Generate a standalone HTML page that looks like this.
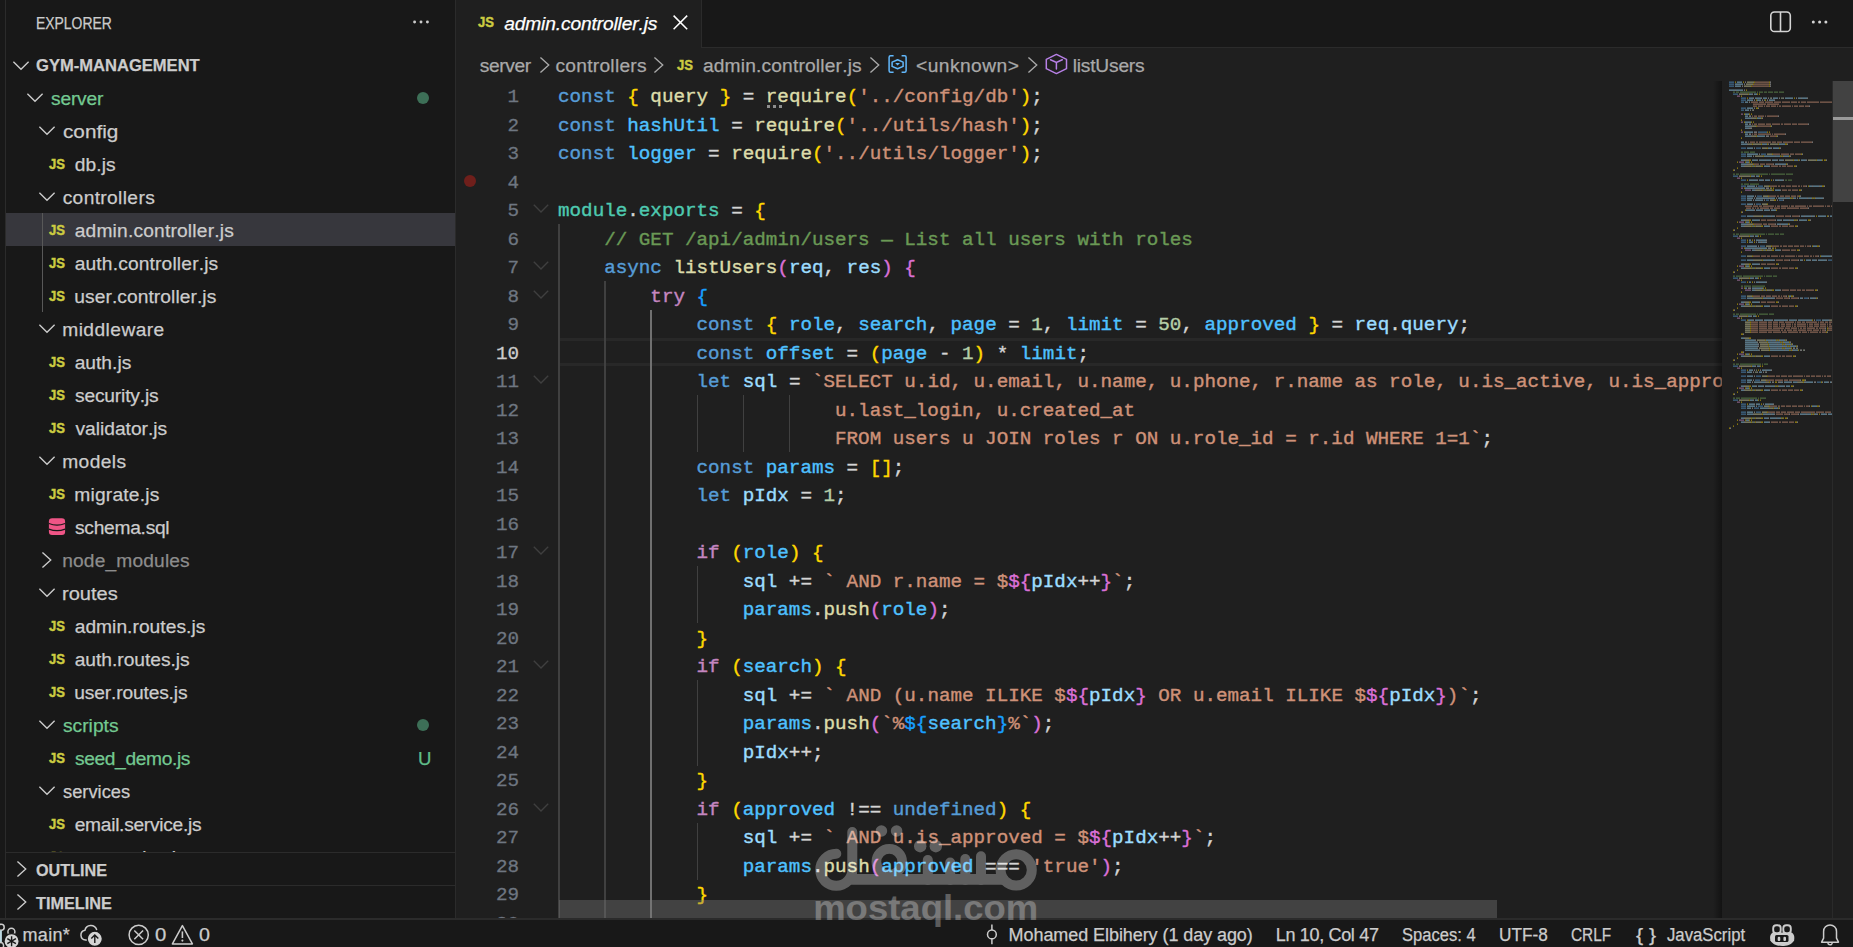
<!DOCTYPE html>
<html><head><meta charset="utf-8"><title>admin.controller.js - gym-management</title>
<style>
*{box-sizing:border-box;margin:0;padding:0}
html,body{width:1853px;height:947px;overflow:hidden;background:#1f1f1f}
body{position:relative;font-family:"Liberation Sans",sans-serif;color:#cccccc}
.a{position:absolute}
.t{position:absolute;white-space:pre;font-kerning:none;-webkit-text-stroke:0.25px}
#strip{position:absolute;left:0;top:0;width:6px;height:919px;background:#181818;border-right:1px solid #2b2b2b}
#sidebar{position:absolute;left:6px;top:0;width:450px;height:919px;background:#181818;border-right:1px solid #2b2b2b}
#tree{position:absolute;left:0;top:81px;width:455px;height:771px;overflow:hidden}
#treein{position:absolute;left:0;top:-81px;width:455px;height:947px}
#tabs{position:absolute;left:456px;top:0;width:1397px;height:48px;background:#181818;border-bottom:1px solid #2b2b2b}
#tab{position:absolute;left:456px;top:0;width:246px;height:48px;background:#1f1f1f;border-right:1px solid #2b2b2b}
#code{position:absolute;left:456px;top:81px;width:1266px;height:838px;overflow:hidden;font-family:"Liberation Mono",monospace;font-size:19.24px}
#codein{position:absolute;left:-456px;top:-81px;width:1853px;height:947px}
.ln{position:absolute;left:456px;width:63px;height:28.5px;line-height:28.5px;text-align:right;color:#6e7681;white-space:pre;-webkit-text-stroke:0.3px}
.ln.cur{color:#cccccc}
.cl{position:absolute;left:558px;height:28.5px;line-height:28.5px;white-space:pre;color:#d4d4d4;-webkit-text-stroke:0.4px}
#curline{position:absolute;left:559px;top:338px;width:1294px;height:28px;border-top:3px solid #282828;border-bottom:3px solid #282828}
#bp{position:absolute;left:464.2px;top:174.9px;width:12.2px;height:12.2px;border-radius:50%;background:#6f1f1b}
#hscroll{position:absolute;left:559px;top:900px;width:938px;height:18px;background:rgba(121,121,121,0.4)}
#mm{position:absolute;left:1722px;top:81px;width:111px;height:838px;background:#1f1f1f;overflow:hidden}
#mmshadow{position:absolute;left:1713px;top:81px;width:9px;height:838px;background:linear-gradient(to right,rgba(0,0,0,0) 0%,rgba(0,0,0,0.4) 100%)}
#vscroll{position:absolute;left:1833px;top:81px;width:20px;height:120.5px;background:rgba(121,121,121,0.4)}
#vmark{position:absolute;left:1833px;top:117px;width:20px;height:3px;background:#9a9a9a}
#vline{position:absolute;left:1832px;top:81px;width:1px;height:838px;background:#2a2a2a}
#status{position:absolute;left:0;top:918px;width:1853px;height:29px;background:#181818;border-top:2px solid #2b2b2b}
</style></head>
<body>
<div id="strip"></div>
<div id="sidebar"></div>
<div class="t" style="top:11px;font-size:17.4px;color:#cccccc;line-height:24px;height:24px;left:35.86px;transform:scaleX(0.8008);transform-origin:0 0;">EXPLORER</div>
<svg class="a" style="left:412px;top:19px" width="18" height="6" viewBox="0 0 18 6"><circle cx="2.6" cy="3" r="1.45" fill="#cccccc"/><circle cx="9" cy="3" r="1.45" fill="#cccccc"/><circle cx="15.4" cy="3" r="1.45" fill="#cccccc"/></svg>
<svg class="a" style="left:9.2px;top:54.0px" width="24" height="24" viewBox="0 0 24 24"><path d="M4.4 7.6499999999999995 L12 15.25 L19.6 7.6499999999999995" fill="none" stroke="#cccccc" stroke-width="1.35"/></svg>
<div class="t" style="top:53px;font-size:17.4px;color:#cccccc;line-height:24px;height:24px;font-weight:bold;left:35.87px;transform:scaleX(0.9521);transform-origin:0 0;">GYM-MANAGEMENT</div>
<div id="tree"><div id="treein">
<svg class="a" style="left:22.6px;top:86.3px" width="24" height="24" viewBox="0 0 24 24"><path d="M4.4 7.6499999999999995 L12 15.25 L19.6 7.6499999999999995" fill="none" stroke="#cccccc" stroke-width="1.35"/></svg>
<div class="t" style="top:87px;font-size:19.2px;color:#73c991;line-height:24px;height:24px;left:51.07px;letter-spacing:-0.218px;">server</div>
<div class="a" style="left:417px;top:91.6px;width:12px;height:12px;border-radius:50%;background:#3d6f57"></div>
<svg class="a" style="left:34.6px;top:119.30000000000001px" width="24" height="24" viewBox="0 0 24 24"><path d="M4.4 7.6499999999999995 L12 15.25 L19.6 7.6499999999999995" fill="none" stroke="#cccccc" stroke-width="1.35"/></svg>
<div class="t" style="top:120px;font-size:19.2px;color:#cccccc;line-height:24px;height:24px;left:62.62px;transform:scaleX(1.0797);transform-origin:0 0;">config</div>
<div class="t" style="top:152px;font-size:15.4px;color:#cbcb41;line-height:24px;height:24px;font-weight:bold;left:48.70px;transform:scaleX(0.8499);transform-origin:0 0;-webkit-text-stroke:0.45px #cbcb41;">JS</div>
<div class="t" style="top:153px;font-size:19.2px;color:#cccccc;line-height:24px;height:24px;left:74.69px;letter-spacing:0.111px;">db.js</div>
<svg class="a" style="left:34.6px;top:185.3px" width="24" height="24" viewBox="0 0 24 24"><path d="M4.4 7.6499999999999995 L12 15.25 L19.6 7.6499999999999995" fill="none" stroke="#cccccc" stroke-width="1.35"/></svg>
<div class="t" style="top:186px;font-size:19.2px;color:#cccccc;line-height:24px;height:24px;left:62.68px;letter-spacing:0.354px;">controllers</div>
<div class="a" style="left:6px;top:213px;width:449px;height:33px;background:#37373d"></div>
<div class="t" style="top:218px;font-size:15.4px;color:#cbcb41;line-height:24px;height:24px;font-weight:bold;left:48.70px;transform:scaleX(0.8499);transform-origin:0 0;-webkit-text-stroke:0.45px #cbcb41;">JS</div>
<div class="t" style="top:219px;font-size:19.2px;color:#cccccc;line-height:24px;height:24px;left:74.68px;letter-spacing:0.19px;">admin.controller.js</div>
<div class="t" style="top:251px;font-size:15.4px;color:#cbcb41;line-height:24px;height:24px;font-weight:bold;left:48.70px;transform:scaleX(0.8499);transform-origin:0 0;-webkit-text-stroke:0.45px #cbcb41;">JS</div>
<div class="t" style="top:252px;font-size:19.2px;color:#cccccc;line-height:24px;height:24px;left:74.68px;letter-spacing:0.161px;">auth.controller.js</div>
<div class="t" style="top:284px;font-size:15.4px;color:#cbcb41;line-height:24px;height:24px;font-weight:bold;left:48.70px;transform:scaleX(0.8499);transform-origin:0 0;-webkit-text-stroke:0.45px #cbcb41;">JS</div>
<div class="t" style="top:285px;font-size:19.2px;color:#cccccc;line-height:24px;height:24px;left:74.25px;letter-spacing:0.076px;">user.controller.js</div>
<svg class="a" style="left:34.6px;top:317.3px" width="24" height="24" viewBox="0 0 24 24"><path d="M4.4 7.6499999999999995 L12 15.25 L19.6 7.6499999999999995" fill="none" stroke="#cccccc" stroke-width="1.35"/></svg>
<div class="t" style="top:318px;font-size:19.2px;color:#cccccc;line-height:24px;height:24px;left:62.23px;letter-spacing:0.439px;">middleware</div>
<div class="t" style="top:350px;font-size:15.4px;color:#cbcb41;line-height:24px;height:24px;font-weight:bold;left:48.70px;transform:scaleX(0.8499);transform-origin:0 0;-webkit-text-stroke:0.45px #cbcb41;">JS</div>
<div class="t" style="top:351px;font-size:19.2px;color:#cccccc;line-height:24px;height:24px;left:74.68px;letter-spacing:0.007px;">auth.js</div>
<div class="t" style="top:383px;font-size:15.4px;color:#cbcb41;line-height:24px;height:24px;font-weight:bold;left:48.70px;transform:scaleX(0.8499);transform-origin:0 0;-webkit-text-stroke:0.45px #cbcb41;">JS</div>
<div class="t" style="top:384px;font-size:19.2px;color:#cccccc;line-height:24px;height:24px;left:74.97px;letter-spacing:-0.162px;">security.js</div>
<div class="t" style="top:416px;font-size:15.4px;color:#cbcb41;line-height:24px;height:24px;font-weight:bold;left:48.70px;transform:scaleX(0.8499);transform-origin:0 0;-webkit-text-stroke:0.45px #cbcb41;">JS</div>
<div class="t" style="top:417px;font-size:19.2px;color:#cccccc;line-height:24px;height:24px;left:75.43px;letter-spacing:-0.001px;">validator.js</div>
<svg class="a" style="left:34.6px;top:449.3px" width="24" height="24" viewBox="0 0 24 24"><path d="M4.4 7.6499999999999995 L12 15.25 L19.6 7.6499999999999995" fill="none" stroke="#cccccc" stroke-width="1.35"/></svg>
<div class="t" style="top:450px;font-size:19.2px;color:#cccccc;line-height:24px;height:24px;left:62.23px;letter-spacing:0.395px;">models</div>
<div class="t" style="top:482px;font-size:15.4px;color:#cbcb41;line-height:24px;height:24px;font-weight:bold;left:48.70px;transform:scaleX(0.8499);transform-origin:0 0;-webkit-text-stroke:0.45px #cbcb41;">JS</div>
<div class="t" style="top:483px;font-size:19.2px;color:#cccccc;line-height:24px;height:24px;left:74.22px;letter-spacing:0.216px;">migrate.js</div>
<svg class="a" style="left:48.0px;top:517.4px" width="18" height="19" viewBox="0 0 18 19"><rect x="0.9" y="1.3" width="16.2" height="16.6" rx="3.2" fill="#ef5586"/><path d="M0.9 6.5 Q9 9.7 17.1 6.5 M0.9 12.1 Q9 15.3 17.1 12.1" fill="none" stroke="#181818" stroke-width="1.15"/></svg>
<div class="t" style="top:516px;font-size:19.2px;color:#cccccc;line-height:24px;height:24px;left:74.97px;letter-spacing:-0.265px;">schema.sql</div>
<svg class="a" style="left:35.3px;top:548.3px" width="24" height="24" viewBox="0 0 24 24"><path d="M7.449999999999999 4.4 L15.749999999999998 12 L7.449999999999999 19.6" fill="none" stroke="#cccccc" stroke-width="1.35"/></svg>
<div class="t" style="top:549px;font-size:19.2px;color:#8c8c8c;line-height:24px;height:24px;left:62.23px;letter-spacing:0.146px;">node_modules</div>
<svg class="a" style="left:34.6px;top:581.3px" width="24" height="24" viewBox="0 0 24 24"><path d="M4.4 7.6499999999999995 L12 15.25 L19.6 7.6499999999999995" fill="none" stroke="#cccccc" stroke-width="1.35"/></svg>
<div class="t" style="top:582px;font-size:19.2px;color:#cccccc;line-height:24px;height:24px;left:62.17px;transform:scaleX(1.0449);transform-origin:0 0;">routes</div>
<div class="t" style="top:614px;font-size:15.4px;color:#cbcb41;line-height:24px;height:24px;font-weight:bold;left:48.70px;transform:scaleX(0.8499);transform-origin:0 0;-webkit-text-stroke:0.45px #cbcb41;">JS</div>
<div class="t" style="top:615px;font-size:19.2px;color:#cccccc;line-height:24px;height:24px;left:74.68px;letter-spacing:0.037px;">admin.routes.js</div>
<div class="t" style="top:647px;font-size:15.4px;color:#cbcb41;line-height:24px;height:24px;font-weight:bold;left:48.70px;transform:scaleX(0.8499);transform-origin:0 0;-webkit-text-stroke:0.45px #cbcb41;">JS</div>
<div class="t" style="top:648px;font-size:19.2px;color:#cccccc;line-height:24px;height:24px;left:74.68px;letter-spacing:-0.012px;">auth.routes.js</div>
<div class="t" style="top:680px;font-size:15.4px;color:#cbcb41;line-height:24px;height:24px;font-weight:bold;left:48.70px;transform:scaleX(0.8499);transform-origin:0 0;-webkit-text-stroke:0.45px #cbcb41;">JS</div>
<div class="t" style="top:681px;font-size:19.2px;color:#cccccc;line-height:24px;height:24px;left:74.25px;letter-spacing:-0.147px;">user.routes.js</div>
<svg class="a" style="left:34.6px;top:713.3px" width="24" height="24" viewBox="0 0 24 24"><path d="M4.4 7.6499999999999995 L12 15.25 L19.6 7.6499999999999995" fill="none" stroke="#cccccc" stroke-width="1.35"/></svg>
<div class="t" style="top:714px;font-size:19.2px;color:#73c991;line-height:24px;height:24px;left:62.97px;letter-spacing:0.026px;">scripts</div>
<div class="a" style="left:417px;top:718.6px;width:12px;height:12px;border-radius:50%;background:#3d6f57"></div>
<div class="t" style="top:746px;font-size:15.4px;color:#cbcb41;line-height:24px;height:24px;font-weight:bold;left:48.70px;transform:scaleX(0.8499);transform-origin:0 0;-webkit-text-stroke:0.45px #cbcb41;">JS</div>
<div class="t" style="top:747px;font-size:19.2px;color:#73c991;line-height:24px;height:24px;left:74.97px;letter-spacing:-0.365px;">seed_demo.js</div>
<div class="t" style="top:747px;font-size:18.6px;color:#5fbd8a;line-height:24px;height:24px;left:417.97px;letter-spacing:0.338px;">U</div>
<svg class="a" style="left:34.6px;top:779.3px" width="24" height="24" viewBox="0 0 24 24"><path d="M4.4 7.6499999999999995 L12 15.25 L19.6 7.6499999999999995" fill="none" stroke="#cccccc" stroke-width="1.35"/></svg>
<div class="t" style="top:780px;font-size:19.2px;color:#cccccc;line-height:24px;height:24px;left:62.99px;transform:scaleX(0.9539);transform-origin:0 0;">services</div>
<div class="t" style="top:812px;font-size:15.4px;color:#cbcb41;line-height:24px;height:24px;font-weight:bold;left:48.70px;transform:scaleX(0.8499);transform-origin:0 0;-webkit-text-stroke:0.45px #cbcb41;">JS</div>
<div class="t" style="top:813px;font-size:19.2px;color:#cccccc;line-height:24px;height:24px;left:74.68px;letter-spacing:-0.281px;">email.service.js</div>
<div class="t" style="top:845px;font-size:15.4px;color:#cbcb41;line-height:24px;height:24px;font-weight:bold;left:48.70px;transform:scaleX(0.8499);transform-origin:0 0;-webkit-text-stroke:0.45px #cbcb41;">JS</div>
<div class="t" style="top:846px;font-size:19.2px;color:#cccccc;line-height:24px;height:24px;left:74.69px;letter-spacing:-0.08px;">otp.service.js</div>
<div class="a" style="left:42px;top:213px;height:99px;width:1px;background:#585858"></div>
</div></div>
<div class="a" style="left:6px;top:852px;width:449px;height:34px;background:#181818;border-top:1px solid #2b2b2b"></div>
<svg class="a" style="left:9.8px;top:857.1px" width="24" height="24" viewBox="0 0 24 24"><path d="M7.449999999999999 4.4 L15.749999999999998 12 L7.449999999999999 19.6" fill="none" stroke="#cccccc" stroke-width="1.35"/></svg>
<div class="t" style="top:858px;font-size:17.4px;color:#cccccc;line-height:24px;height:24px;font-weight:bold;left:35.54px;transform:scaleX(0.9310);transform-origin:0 0;">OUTLINE</div>
<div class="a" style="left:6px;top:885px;width:449px;height:34px;background:#181818;border-top:1px solid #2b2b2b"></div>
<svg class="a" style="left:9.8px;top:890.1px" width="24" height="24" viewBox="0 0 24 24"><path d="M7.449999999999999 4.4 L15.749999999999998 12 L7.449999999999999 19.6" fill="none" stroke="#cccccc" stroke-width="1.35"/></svg>
<div class="t" style="top:891px;font-size:17.4px;color:#cccccc;line-height:24px;height:24px;font-weight:bold;left:36.22px;transform:scaleX(0.9337);transform-origin:0 0;">TIMELINE</div>

<div id="code"><div id="codein">
<div id="curline"></div>
<div class="a" style="left:558.00px;top:224.00px;height:741.00px;width:1.5px;background:#404040"></div>
<div class="a" style="left:604.18px;top:281.00px;height:684.00px;width:1.5px;background:#404040"></div>
<div class="a" style="left:650.37px;top:309.50px;height:655.50px;width:1.5px;background:#707070"></div>
<div class="a" style="left:696.55px;top:395.00px;height:57.00px;width:1.5px;background:#404040"></div>
<div class="a" style="left:742.74px;top:395.00px;height:57.00px;width:1.5px;background:#404040"></div>
<div class="a" style="left:788.92px;top:395.00px;height:57.00px;width:1.5px;background:#404040"></div>
<div class="a" style="left:696.55px;top:566.00px;height:57.00px;width:1.5px;background:#404040"></div>
<div class="a" style="left:696.55px;top:680.00px;height:85.50px;width:1.5px;background:#404040"></div>
<div class="a" style="left:696.55px;top:822.50px;height:57.00px;width:1.5px;background:#404040"></div>
<div class="ln" style="top:83.0px">1</div>
<div class="cl" style="top:83.0px"><span style="color:#569cd6">const</span> <span style="color:#ffd700">{</span> <span style="color:#dcdcaa">query</span> <span style="color:#ffd700">}</span> = <span style="color:#dcdcaa">require</span><span style="color:#ffd700">(</span><span style="color:#ce9178">&#x27;../config/db&#x27;</span><span style="color:#ffd700">)</span>;</div>
<div class="ln" style="top:111.5px">2</div>
<div class="cl" style="top:111.5px"><span style="color:#569cd6">const</span> <span style="color:#4fc1ff">hashUtil</span> = <span style="color:#dcdcaa">require</span><span style="color:#ffd700">(</span><span style="color:#ce9178">&#x27;../utils/hash&#x27;</span><span style="color:#ffd700">)</span>;</div>
<div class="ln" style="top:140.0px">3</div>
<div class="cl" style="top:140.0px"><span style="color:#569cd6">const</span> <span style="color:#4fc1ff">logger</span> = <span style="color:#dcdcaa">require</span><span style="color:#ffd700">(</span><span style="color:#ce9178">&#x27;../utils/logger&#x27;</span><span style="color:#ffd700">)</span>;</div>
<div class="ln" style="top:168.5px">4</div>
<div class="ln" style="top:197.0px">5</div>
<svg class="a" style="left:529.3px;top:197.4px" width="24" height="24" viewBox="0 0 24 24"><path d="M4.8 7.8500000000000005 L12 15.049999999999999 L19.2 7.8500000000000005" fill="none" stroke="#3f3f3f" stroke-width="1.4"/></svg>
<div class="cl" style="top:197.0px"><span style="color:#4ec9b0">module</span>.<span style="color:#4ec9b0">exports</span> = <span style="color:#ffd700">{</span></div>
<div class="ln" style="top:225.5px">6</div>
<div class="cl" style="top:225.5px">    <span style="color:#6a9955">// GET /api/admin/users — List all users with roles</span></div>
<div class="ln" style="top:254.0px">7</div>
<svg class="a" style="left:529.3px;top:254.39999999999998px" width="24" height="24" viewBox="0 0 24 24"><path d="M4.8 7.8500000000000005 L12 15.049999999999999 L19.2 7.8500000000000005" fill="none" stroke="#3f3f3f" stroke-width="1.4"/></svg>
<div class="cl" style="top:254.0px">    <span style="color:#569cd6">async</span> <span style="color:#dcdcaa">listUsers</span><span style="color:#da70d6">(</span><span style="color:#9cdcfe">req</span>, <span style="color:#9cdcfe">res</span><span style="color:#da70d6">)</span> <span style="color:#da70d6">{</span></div>
<div class="ln" style="top:282.5px">8</div>
<svg class="a" style="left:529.3px;top:282.9px" width="24" height="24" viewBox="0 0 24 24"><path d="M4.8 7.8500000000000005 L12 15.049999999999999 L19.2 7.8500000000000005" fill="none" stroke="#3f3f3f" stroke-width="1.4"/></svg>
<div class="cl" style="top:282.5px">        <span style="color:#c586c0">try</span> <span style="color:#179fff">{</span></div>
<div class="ln" style="top:311.0px">9</div>
<div class="cl" style="top:311.0px">            <span style="color:#569cd6">const</span> <span style="color:#ffd700">{</span> <span style="color:#4fc1ff">role</span>, <span style="color:#4fc1ff">search</span>, <span style="color:#4fc1ff">page</span> = <span style="color:#b5cea8">1</span>, <span style="color:#4fc1ff">limit</span> = <span style="color:#b5cea8">50</span>, <span style="color:#4fc1ff">approved</span> <span style="color:#ffd700">}</span> = <span style="color:#9cdcfe">req</span>.<span style="color:#9cdcfe">query</span>;</div>
<div class="ln cur" style="top:339.5px">10</div>
<div class="cl" style="top:339.5px">            <span style="color:#569cd6">const</span> <span style="color:#4fc1ff">offset</span> = <span style="color:#ffd700">(</span><span style="color:#4fc1ff">page</span> - <span style="color:#b5cea8">1</span><span style="color:#ffd700">)</span> * <span style="color:#4fc1ff">limit</span>;</div>
<div class="ln" style="top:368.0px">11</div>
<svg class="a" style="left:529.3px;top:368.4px" width="24" height="24" viewBox="0 0 24 24"><path d="M4.8 7.8500000000000005 L12 15.049999999999999 L19.2 7.8500000000000005" fill="none" stroke="#3f3f3f" stroke-width="1.4"/></svg>
<div class="cl" style="top:368.0px">            <span style="color:#569cd6">let</span> <span style="color:#9cdcfe">sql</span> = <span style="color:#ce9178">`SELECT u.id, u.email, u.name, u.phone, r.name as role, u.is_active, u.is_approved, u.email_verified,</span></div>
<div class="ln" style="top:396.5px">12</div>
<div class="cl" style="top:396.5px">                        <span style="color:#ce9178">u.last_login, u.created_at</span></div>
<div class="ln" style="top:425.0px">13</div>
<div class="cl" style="top:425.0px">                        <span style="color:#ce9178">FROM users u JOIN roles r ON u.role_id = r.id WHERE 1=1`</span>;</div>
<div class="ln" style="top:453.5px">14</div>
<div class="cl" style="top:453.5px">            <span style="color:#569cd6">const</span> <span style="color:#4fc1ff">params</span> = <span style="color:#ffd700">[]</span>;</div>
<div class="ln" style="top:482.0px">15</div>
<div class="cl" style="top:482.0px">            <span style="color:#569cd6">let</span> <span style="color:#9cdcfe">pIdx</span> = <span style="color:#b5cea8">1</span>;</div>
<div class="ln" style="top:510.5px">16</div>
<div class="ln" style="top:539.0px">17</div>
<svg class="a" style="left:529.3px;top:539.4px" width="24" height="24" viewBox="0 0 24 24"><path d="M4.8 7.8500000000000005 L12 15.049999999999999 L19.2 7.8500000000000005" fill="none" stroke="#3f3f3f" stroke-width="1.4"/></svg>
<div class="cl" style="top:539.0px">            <span style="color:#c586c0">if</span> <span style="color:#ffd700">(</span><span style="color:#4fc1ff">role</span><span style="color:#ffd700">)</span> <span style="color:#ffd700">{</span></div>
<div class="ln" style="top:567.5px">18</div>
<div class="cl" style="top:567.5px">                <span style="color:#9cdcfe">sql</span> += <span style="color:#ce9178">` AND r.name = $</span><span style="color:#da70d6">${</span><span style="color:#9cdcfe">pIdx</span>++<span style="color:#da70d6">}</span><span style="color:#ce9178">`</span>;</div>
<div class="ln" style="top:596.0px">19</div>
<div class="cl" style="top:596.0px">                <span style="color:#4fc1ff">params</span>.<span style="color:#dcdcaa">push</span><span style="color:#da70d6">(</span><span style="color:#4fc1ff">role</span><span style="color:#da70d6">)</span>;</div>
<div class="ln" style="top:624.5px">20</div>
<div class="cl" style="top:624.5px">            <span style="color:#ffd700">}</span></div>
<div class="ln" style="top:653.0px">21</div>
<svg class="a" style="left:529.3px;top:653.4px" width="24" height="24" viewBox="0 0 24 24"><path d="M4.8 7.8500000000000005 L12 15.049999999999999 L19.2 7.8500000000000005" fill="none" stroke="#3f3f3f" stroke-width="1.4"/></svg>
<div class="cl" style="top:653.0px">            <span style="color:#c586c0">if</span> <span style="color:#ffd700">(</span><span style="color:#4fc1ff">search</span><span style="color:#ffd700">)</span> <span style="color:#ffd700">{</span></div>
<div class="ln" style="top:681.5px">22</div>
<div class="cl" style="top:681.5px">                <span style="color:#9cdcfe">sql</span> += <span style="color:#ce9178">` AND (u.name ILIKE $</span><span style="color:#da70d6">${</span><span style="color:#9cdcfe">pIdx</span><span style="color:#da70d6">}</span><span style="color:#ce9178"> OR u.email ILIKE $</span><span style="color:#da70d6">${</span><span style="color:#9cdcfe">pIdx</span><span style="color:#da70d6">}</span><span style="color:#ce9178">)`</span>;</div>
<div class="ln" style="top:710.0px">23</div>
<div class="cl" style="top:710.0px">                <span style="color:#4fc1ff">params</span>.<span style="color:#dcdcaa">push</span><span style="color:#da70d6">(</span><span style="color:#ce9178">`%</span><span style="color:#179fff">${</span><span style="color:#4fc1ff">search</span><span style="color:#179fff">}</span><span style="color:#ce9178">%`</span><span style="color:#da70d6">)</span>;</div>
<div class="ln" style="top:738.5px">24</div>
<div class="cl" style="top:738.5px">                <span style="color:#9cdcfe">pIdx</span>++;</div>
<div class="ln" style="top:767.0px">25</div>
<div class="cl" style="top:767.0px">            <span style="color:#ffd700">}</span></div>
<div class="ln" style="top:795.5px">26</div>
<svg class="a" style="left:529.3px;top:795.9px" width="24" height="24" viewBox="0 0 24 24"><path d="M4.8 7.8500000000000005 L12 15.049999999999999 L19.2 7.8500000000000005" fill="none" stroke="#3f3f3f" stroke-width="1.4"/></svg>
<div class="cl" style="top:795.5px">            <span style="color:#c586c0">if</span> <span style="color:#ffd700">(</span><span style="color:#4fc1ff">approved</span> !== <span style="color:#569cd6">undefined</span><span style="color:#ffd700">)</span> <span style="color:#ffd700">{</span></div>
<div class="ln" style="top:824.0px">27</div>
<div class="cl" style="top:824.0px">                <span style="color:#9cdcfe">sql</span> += <span style="color:#ce9178">` AND u.is_approved = $</span><span style="color:#da70d6">${</span><span style="color:#9cdcfe">pIdx</span>++<span style="color:#da70d6">}</span><span style="color:#ce9178">`</span>;</div>
<div class="ln" style="top:852.5px">28</div>
<div class="cl" style="top:852.5px">                <span style="color:#4fc1ff">params</span>.<span style="color:#dcdcaa">push</span><span style="color:#da70d6">(</span><span style="color:#4fc1ff">approved</span> === <span style="color:#ce9178">&#x27;true&#x27;</span><span style="color:#da70d6">)</span>;</div>
<div class="ln" style="top:881.0px">29</div>
<div class="cl" style="top:881.0px">            <span style="color:#ffd700">}</span></div>
<div class="ln" style="top:909.5px">30</div>
<div id="bp"></div>
<div class="a" style="left:767px;top:105px;width:3px;height:3.2px;background:#8e8e8e"></div><div class="a" style="left:773px;top:105px;width:3px;height:3.2px;background:#8e8e8e"></div><div class="a" style="left:779px;top:105px;width:3px;height:3.2px;background:#8e8e8e"></div>
</div></div>
<div id="hscroll"></div>
<div id="mm"><svg class="a" style="left:0;top:0" width="111" height="350" viewBox="0 0 111 350"><g opacity="0.56"><rect x="7" y="0.5" width="5" height="1.3" fill="#569cd6"/><rect x="13" y="0.5" width="1" height="1.3" fill="#ffd700"/><rect x="15" y="0.5" width="5" height="1.3" fill="#9cdcfe"/><rect x="21" y="0.5" width="1" height="1.3" fill="#ffd700"/><rect x="23" y="0.5" width="1" height="1.3" fill="#d4d4d4"/><rect x="25" y="0.5" width="7" height="1.3" fill="#dcdcaa"/><rect x="32" y="0.5" width="1" height="1.3" fill="#ffd700"/><rect x="33" y="0.5" width="14" height="1.3" fill="#ce9178"/><rect x="47" y="0.5" width="1" height="1.3" fill="#ffd700"/><rect x="48" y="0.5" width="1" height="1.3" fill="#d4d4d4"/><rect x="7" y="2.5" width="5" height="1.3" fill="#569cd6"/><rect x="13" y="2.5" width="8" height="1.3" fill="#9cdcfe"/><rect x="22" y="2.5" width="1" height="1.3" fill="#d4d4d4"/><rect x="24" y="2.5" width="7" height="1.3" fill="#dcdcaa"/><rect x="31" y="2.5" width="1" height="1.3" fill="#ffd700"/><rect x="32" y="2.5" width="15" height="1.3" fill="#ce9178"/><rect x="47" y="2.5" width="1" height="1.3" fill="#ffd700"/><rect x="48" y="2.5" width="1" height="1.3" fill="#d4d4d4"/><rect x="7" y="4.5" width="5" height="1.3" fill="#569cd6"/><rect x="13" y="4.5" width="6" height="1.3" fill="#9cdcfe"/><rect x="20" y="4.5" width="1" height="1.3" fill="#d4d4d4"/><rect x="22" y="4.5" width="7" height="1.3" fill="#dcdcaa"/><rect x="29" y="4.5" width="1" height="1.3" fill="#ffd700"/><rect x="30" y="4.5" width="17" height="1.3" fill="#ce9178"/><rect x="47" y="4.5" width="1" height="1.3" fill="#ffd700"/><rect x="48" y="4.5" width="1" height="1.3" fill="#d4d4d4"/><rect x="7" y="8.5" width="6" height="1.3" fill="#9cdcfe"/><rect x="13" y="8.5" width="1" height="1.3" fill="#d4d4d4"/><rect x="14" y="8.5" width="7" height="1.3" fill="#9cdcfe"/><rect x="22" y="8.5" width="1" height="1.3" fill="#d4d4d4"/><rect x="24" y="8.5" width="1" height="1.3" fill="#ffd700"/><rect x="11" y="10.5" width="2" height="1.3" fill="#6a9955"/><rect x="14" y="10.5" width="3" height="1.3" fill="#6a9955"/><rect x="18" y="10.5" width="16" height="1.3" fill="#6a9955"/><rect x="35" y="10.5" width="1" height="1.3" fill="#6a9955"/><rect x="37" y="10.5" width="4" height="1.3" fill="#6a9955"/><rect x="42" y="10.5" width="3" height="1.3" fill="#6a9955"/><rect x="46" y="10.5" width="5" height="1.3" fill="#6a9955"/><rect x="52" y="10.5" width="4" height="1.3" fill="#6a9955"/><rect x="57" y="10.5" width="5" height="1.3" fill="#6a9955"/><rect x="11" y="12.5" width="5" height="1.3" fill="#569cd6"/><rect x="17" y="12.5" width="9" height="1.3" fill="#dcdcaa"/><rect x="26" y="12.5" width="1" height="1.3" fill="#ffd700"/><rect x="27" y="12.5" width="3" height="1.3" fill="#9cdcfe"/><rect x="30" y="12.5" width="1" height="1.3" fill="#d4d4d4"/><rect x="32" y="12.5" width="3" height="1.3" fill="#9cdcfe"/><rect x="35" y="12.5" width="1" height="1.3" fill="#ffd700"/><rect x="37" y="12.5" width="1" height="1.3" fill="#ffd700"/><rect x="15" y="14.5" width="3" height="1.3" fill="#c586c0"/><rect x="19" y="14.5" width="1" height="1.3" fill="#ffd700"/><rect x="19" y="16.5" width="5" height="1.3" fill="#569cd6"/><rect x="25" y="16.5" width="1" height="1.3" fill="#ffd700"/><rect x="27" y="16.5" width="4" height="1.3" fill="#9cdcfe"/><rect x="31" y="16.5" width="1" height="1.3" fill="#d4d4d4"/><rect x="33" y="16.5" width="6" height="1.3" fill="#9cdcfe"/><rect x="39" y="16.5" width="1" height="1.3" fill="#d4d4d4"/><rect x="41" y="16.5" width="4" height="1.3" fill="#9cdcfe"/><rect x="46" y="16.5" width="1" height="1.3" fill="#d4d4d4"/><rect x="48" y="16.5" width="1" height="1.3" fill="#b5cea8"/><rect x="49" y="16.5" width="1" height="1.3" fill="#d4d4d4"/><rect x="51" y="16.5" width="5" height="1.3" fill="#9cdcfe"/><rect x="57" y="16.5" width="1" height="1.3" fill="#d4d4d4"/><rect x="59" y="16.5" width="2" height="1.3" fill="#b5cea8"/><rect x="61" y="16.5" width="1" height="1.3" fill="#d4d4d4"/><rect x="63" y="16.5" width="8" height="1.3" fill="#9cdcfe"/><rect x="72" y="16.5" width="1" height="1.3" fill="#ffd700"/><rect x="74" y="16.5" width="1" height="1.3" fill="#d4d4d4"/><rect x="76" y="16.5" width="3" height="1.3" fill="#9cdcfe"/><rect x="79" y="16.5" width="1" height="1.3" fill="#d4d4d4"/><rect x="80" y="16.5" width="5" height="1.3" fill="#9cdcfe"/><rect x="85" y="16.5" width="1" height="1.3" fill="#d4d4d4"/><rect x="19" y="18.5" width="5" height="1.3" fill="#569cd6"/><rect x="25" y="18.5" width="6" height="1.3" fill="#9cdcfe"/><rect x="32" y="18.5" width="1" height="1.3" fill="#d4d4d4"/><rect x="34" y="18.5" width="1" height="1.3" fill="#ffd700"/><rect x="35" y="18.5" width="4" height="1.3" fill="#9cdcfe"/><rect x="40" y="18.5" width="1" height="1.3" fill="#d4d4d4"/><rect x="42" y="18.5" width="1" height="1.3" fill="#b5cea8"/><rect x="43" y="18.5" width="1" height="1.3" fill="#ffd700"/><rect x="45" y="18.5" width="1" height="1.3" fill="#d4d4d4"/><rect x="47" y="18.5" width="5" height="1.3" fill="#9cdcfe"/><rect x="52" y="18.5" width="1" height="1.3" fill="#d4d4d4"/><rect x="19" y="20.5" width="3" height="1.3" fill="#569cd6"/><rect x="23" y="20.5" width="3" height="1.3" fill="#9cdcfe"/><rect x="27" y="20.5" width="1" height="1.3" fill="#d4d4d4"/><rect x="29" y="20.5" width="7" height="1.3" fill="#ce9178"/><rect x="37" y="20.5" width="5" height="1.3" fill="#ce9178"/><rect x="43" y="20.5" width="8" height="1.3" fill="#ce9178"/><rect x="52" y="20.5" width="7" height="1.3" fill="#ce9178"/><rect x="60" y="20.5" width="8" height="1.3" fill="#ce9178"/><rect x="69" y="20.5" width="6" height="1.3" fill="#ce9178"/><rect x="76" y="20.5" width="2" height="1.3" fill="#ce9178"/><rect x="79" y="20.5" width="5" height="1.3" fill="#ce9178"/><rect x="85" y="20.5" width="12" height="1.3" fill="#ce9178"/><rect x="98" y="20.5" width="13" height="1.3" fill="#ce9178"/><rect x="31" y="22.5" width="13" height="1.3" fill="#ce9178"/><rect x="45" y="22.5" width="12" height="1.3" fill="#ce9178"/><rect x="31" y="24.5" width="4" height="1.3" fill="#ce9178"/><rect x="36" y="24.5" width="5" height="1.3" fill="#ce9178"/><rect x="42" y="24.5" width="1" height="1.3" fill="#ce9178"/><rect x="44" y="24.5" width="4" height="1.3" fill="#ce9178"/><rect x="49" y="24.5" width="5" height="1.3" fill="#ce9178"/><rect x="55" y="24.5" width="1" height="1.3" fill="#ce9178"/><rect x="57" y="24.5" width="2" height="1.3" fill="#ce9178"/><rect x="60" y="24.5" width="9" height="1.3" fill="#ce9178"/><rect x="70" y="24.5" width="1" height="1.3" fill="#ce9178"/><rect x="72" y="24.5" width="4" height="1.3" fill="#ce9178"/><rect x="77" y="24.5" width="5" height="1.3" fill="#ce9178"/><rect x="83" y="24.5" width="4" height="1.3" fill="#ce9178"/><rect x="87" y="24.5" width="1" height="1.3" fill="#d4d4d4"/><rect x="19" y="26.5" width="5" height="1.3" fill="#569cd6"/><rect x="25" y="26.5" width="6" height="1.3" fill="#9cdcfe"/><rect x="32" y="26.5" width="1" height="1.3" fill="#d4d4d4"/><rect x="34" y="26.5" width="1" height="1.3" fill="#ffd700"/><rect x="35" y="26.5" width="1" height="1.3" fill="#ffd700"/><rect x="36" y="26.5" width="1" height="1.3" fill="#d4d4d4"/><rect x="19" y="28.5" width="3" height="1.3" fill="#569cd6"/><rect x="23" y="28.5" width="4" height="1.3" fill="#9cdcfe"/><rect x="28" y="28.5" width="1" height="1.3" fill="#d4d4d4"/><rect x="30" y="28.5" width="1" height="1.3" fill="#b5cea8"/><rect x="31" y="28.5" width="1" height="1.3" fill="#d4d4d4"/><rect x="19" y="32.5" width="2" height="1.3" fill="#c586c0"/><rect x="22" y="32.5" width="1" height="1.3" fill="#ffd700"/><rect x="23" y="32.5" width="4" height="1.3" fill="#9cdcfe"/><rect x="27" y="32.5" width="1" height="1.3" fill="#ffd700"/><rect x="29" y="32.5" width="1" height="1.3" fill="#ffd700"/><rect x="23" y="34.5" width="3" height="1.3" fill="#9cdcfe"/><rect x="27" y="34.5" width="1" height="1.3" fill="#d4d4d4"/><rect x="28" y="34.5" width="1" height="1.3" fill="#d4d4d4"/><rect x="30" y="34.5" width="1" height="1.3" fill="#ce9178"/><rect x="32" y="34.5" width="3" height="1.3" fill="#ce9178"/><rect x="36" y="34.5" width="6" height="1.3" fill="#ce9178"/><rect x="43" y="34.5" width="1" height="1.3" fill="#ce9178"/><rect x="45" y="34.5" width="11" height="1.3" fill="#ce9178"/><rect x="56" y="34.5" width="1" height="1.3" fill="#d4d4d4"/><rect x="23" y="36.5" width="6" height="1.3" fill="#9cdcfe"/><rect x="29" y="36.5" width="1" height="1.3" fill="#d4d4d4"/><rect x="30" y="36.5" width="4" height="1.3" fill="#dcdcaa"/><rect x="34" y="36.5" width="1" height="1.3" fill="#ffd700"/><rect x="35" y="36.5" width="4" height="1.3" fill="#9cdcfe"/><rect x="39" y="36.5" width="1" height="1.3" fill="#ffd700"/><rect x="40" y="36.5" width="1" height="1.3" fill="#d4d4d4"/><rect x="19" y="38.5" width="1" height="1.3" fill="#ffd700"/><rect x="19" y="40.5" width="2" height="1.3" fill="#c586c0"/><rect x="22" y="40.5" width="1" height="1.3" fill="#ffd700"/><rect x="23" y="40.5" width="6" height="1.3" fill="#9cdcfe"/><rect x="29" y="40.5" width="1" height="1.3" fill="#ffd700"/><rect x="31" y="40.5" width="1" height="1.3" fill="#ffd700"/><rect x="23" y="42.5" width="3" height="1.3" fill="#9cdcfe"/><rect x="27" y="42.5" width="1" height="1.3" fill="#d4d4d4"/><rect x="28" y="42.5" width="1" height="1.3" fill="#d4d4d4"/><rect x="30" y="42.5" width="1" height="1.3" fill="#ce9178"/><rect x="32" y="42.5" width="3" height="1.3" fill="#ce9178"/><rect x="36" y="42.5" width="7" height="1.3" fill="#ce9178"/><rect x="44" y="42.5" width="5" height="1.3" fill="#ce9178"/><rect x="50" y="42.5" width="8" height="1.3" fill="#ce9178"/><rect x="59" y="42.5" width="2" height="1.3" fill="#ce9178"/><rect x="62" y="42.5" width="7" height="1.3" fill="#ce9178"/><rect x="70" y="42.5" width="5" height="1.3" fill="#ce9178"/><rect x="76" y="42.5" width="10" height="1.3" fill="#ce9178"/><rect x="86" y="42.5" width="1" height="1.3" fill="#d4d4d4"/><rect x="23" y="44.5" width="6" height="1.3" fill="#9cdcfe"/><rect x="29" y="44.5" width="1" height="1.3" fill="#d4d4d4"/><rect x="30" y="44.5" width="4" height="1.3" fill="#dcdcaa"/><rect x="34" y="44.5" width="1" height="1.3" fill="#ffd700"/><rect x="35" y="44.5" width="13" height="1.3" fill="#ce9178"/><rect x="48" y="44.5" width="1" height="1.3" fill="#ffd700"/><rect x="49" y="44.5" width="1" height="1.3" fill="#d4d4d4"/><rect x="23" y="46.5" width="4" height="1.3" fill="#9cdcfe"/><rect x="27" y="46.5" width="1" height="1.3" fill="#d4d4d4"/><rect x="28" y="46.5" width="1" height="1.3" fill="#d4d4d4"/><rect x="29" y="46.5" width="1" height="1.3" fill="#d4d4d4"/><rect x="19" y="48.5" width="1" height="1.3" fill="#ffd700"/><rect x="19" y="50.5" width="2" height="1.3" fill="#c586c0"/><rect x="22" y="50.5" width="1" height="1.3" fill="#ffd700"/><rect x="23" y="50.5" width="8" height="1.3" fill="#9cdcfe"/><rect x="32" y="50.5" width="1" height="1.3" fill="#d4d4d4"/><rect x="33" y="50.5" width="1" height="1.3" fill="#d4d4d4"/><rect x="34" y="50.5" width="1" height="1.3" fill="#d4d4d4"/><rect x="36" y="50.5" width="9" height="1.3" fill="#569cd6"/><rect x="45" y="50.5" width="1" height="1.3" fill="#ffd700"/><rect x="47" y="50.5" width="1" height="1.3" fill="#ffd700"/><rect x="23" y="52.5" width="3" height="1.3" fill="#9cdcfe"/><rect x="27" y="52.5" width="1" height="1.3" fill="#d4d4d4"/><rect x="28" y="52.5" width="1" height="1.3" fill="#d4d4d4"/><rect x="30" y="52.5" width="1" height="1.3" fill="#ce9178"/><rect x="32" y="52.5" width="3" height="1.3" fill="#ce9178"/><rect x="36" y="52.5" width="13" height="1.3" fill="#ce9178"/><rect x="50" y="52.5" width="1" height="1.3" fill="#ce9178"/><rect x="52" y="52.5" width="11" height="1.3" fill="#ce9178"/><rect x="63" y="52.5" width="1" height="1.3" fill="#d4d4d4"/><rect x="23" y="54.5" width="6" height="1.3" fill="#9cdcfe"/><rect x="29" y="54.5" width="1" height="1.3" fill="#d4d4d4"/><rect x="30" y="54.5" width="4" height="1.3" fill="#dcdcaa"/><rect x="34" y="54.5" width="1" height="1.3" fill="#ffd700"/><rect x="35" y="54.5" width="8" height="1.3" fill="#9cdcfe"/><rect x="44" y="54.5" width="1" height="1.3" fill="#d4d4d4"/><rect x="45" y="54.5" width="1" height="1.3" fill="#d4d4d4"/><rect x="46" y="54.5" width="1" height="1.3" fill="#d4d4d4"/><rect x="48" y="54.5" width="6" height="1.3" fill="#ce9178"/><rect x="54" y="54.5" width="1" height="1.3" fill="#ffd700"/><rect x="55" y="54.5" width="1" height="1.3" fill="#d4d4d4"/><rect x="19" y="56.5" width="1" height="1.3" fill="#ffd700"/><rect x="19" y="60.5" width="3" height="1.3" fill="#9cdcfe"/><rect x="23" y="60.5" width="1" height="1.3" fill="#d4d4d4"/><rect x="24" y="60.5" width="1" height="1.3" fill="#d4d4d4"/><rect x="26" y="60.5" width="1" height="1.3" fill="#ce9178"/><rect x="28" y="60.5" width="5" height="1.3" fill="#ce9178"/><rect x="34" y="60.5" width="2" height="1.3" fill="#ce9178"/><rect x="37" y="60.5" width="12" height="1.3" fill="#ce9178"/><rect x="50" y="60.5" width="4" height="1.3" fill="#ce9178"/><rect x="55" y="60.5" width="5" height="1.3" fill="#ce9178"/><rect x="61" y="60.5" width="10" height="1.3" fill="#ce9178"/><rect x="72" y="60.5" width="6" height="1.3" fill="#ce9178"/><rect x="79" y="60.5" width="11" height="1.3" fill="#ce9178"/><rect x="90" y="60.5" width="1" height="1.3" fill="#d4d4d4"/><rect x="19" y="62.5" width="6" height="1.3" fill="#9cdcfe"/><rect x="25" y="62.5" width="1" height="1.3" fill="#d4d4d4"/><rect x="26" y="62.5" width="4" height="1.3" fill="#dcdcaa"/><rect x="30" y="62.5" width="1" height="1.3" fill="#ffd700"/><rect x="31" y="62.5" width="8" height="1.3" fill="#dcdcaa"/><rect x="39" y="62.5" width="1" height="1.3" fill="#ffd700"/><rect x="40" y="62.5" width="5" height="1.3" fill="#9cdcfe"/><rect x="45" y="62.5" width="1" height="1.3" fill="#ffd700"/><rect x="46" y="62.5" width="1" height="1.3" fill="#d4d4d4"/><rect x="48" y="62.5" width="8" height="1.3" fill="#dcdcaa"/><rect x="56" y="62.5" width="1" height="1.3" fill="#ffd700"/><rect x="57" y="62.5" width="6" height="1.3" fill="#9cdcfe"/><rect x="63" y="62.5" width="1" height="1.3" fill="#ffd700"/><rect x="64" y="62.5" width="1" height="1.3" fill="#ffd700"/><rect x="65" y="62.5" width="1" height="1.3" fill="#d4d4d4"/><rect x="19" y="66.5" width="5" height="1.3" fill="#569cd6"/><rect x="25" y="66.5" width="6" height="1.3" fill="#9cdcfe"/><rect x="32" y="66.5" width="1" height="1.3" fill="#d4d4d4"/><rect x="34" y="66.5" width="5" height="1.3" fill="#569cd6"/><rect x="40" y="66.5" width="5" height="1.3" fill="#dcdcaa"/><rect x="45" y="66.5" width="1" height="1.3" fill="#ffd700"/><rect x="46" y="66.5" width="3" height="1.3" fill="#9cdcfe"/><rect x="49" y="66.5" width="1" height="1.3" fill="#d4d4d4"/><rect x="51" y="66.5" width="6" height="1.3" fill="#9cdcfe"/><rect x="57" y="66.5" width="1" height="1.3" fill="#ffd700"/><rect x="58" y="66.5" width="1" height="1.3" fill="#d4d4d4"/><rect x="19" y="70.5" width="2" height="1.3" fill="#6a9955"/><rect x="22" y="70.5" width="5" height="1.3" fill="#6a9955"/><rect x="28" y="70.5" width="5" height="1.3" fill="#6a9955"/><rect x="19" y="72.5" width="5" height="1.3" fill="#569cd6"/><rect x="25" y="72.5" width="11" height="1.3" fill="#9cdcfe"/><rect x="37" y="72.5" width="1" height="1.3" fill="#d4d4d4"/><rect x="39" y="72.5" width="5" height="1.3" fill="#569cd6"/><rect x="45" y="72.5" width="5" height="1.3" fill="#dcdcaa"/><rect x="50" y="72.5" width="1" height="1.3" fill="#ffd700"/><rect x="51" y="72.5" width="7" height="1.3" fill="#ce9178"/><rect x="59" y="72.5" width="8" height="1.3" fill="#ce9178"/><rect x="68" y="72.5" width="4" height="1.3" fill="#ce9178"/><rect x="73" y="72.5" width="6" height="1.3" fill="#ce9178"/><rect x="79" y="72.5" width="1" height="1.3" fill="#ffd700"/><rect x="80" y="72.5" width="1" height="1.3" fill="#d4d4d4"/><rect x="19" y="74.5" width="5" height="1.3" fill="#569cd6"/><rect x="25" y="74.5" width="5" height="1.3" fill="#9cdcfe"/><rect x="31" y="74.5" width="1" height="1.3" fill="#d4d4d4"/><rect x="33" y="74.5" width="8" height="1.3" fill="#dcdcaa"/><rect x="41" y="74.5" width="1" height="1.3" fill="#ffd700"/><rect x="42" y="74.5" width="11" height="1.3" fill="#9cdcfe"/><rect x="53" y="74.5" width="1" height="1.3" fill="#d4d4d4"/><rect x="54" y="74.5" width="4" height="1.3" fill="#9cdcfe"/><rect x="58" y="74.5" width="1" height="1.3" fill="#ffd700"/><rect x="59" y="74.5" width="1" height="1.3" fill="#b5cea8"/><rect x="60" y="74.5" width="1" height="1.3" fill="#ffd700"/><rect x="61" y="74.5" width="1" height="1.3" fill="#d4d4d4"/><rect x="62" y="74.5" width="5" height="1.3" fill="#9cdcfe"/><rect x="67" y="74.5" width="1" height="1.3" fill="#ffd700"/><rect x="68" y="74.5" width="1" height="1.3" fill="#d4d4d4"/><rect x="19" y="78.5" width="3" height="1.3" fill="#9cdcfe"/><rect x="22" y="78.5" width="1" height="1.3" fill="#d4d4d4"/><rect x="23" y="78.5" width="4" height="1.3" fill="#dcdcaa"/><rect x="27" y="78.5" width="1" height="1.3" fill="#ffd700"/><rect x="28" y="78.5" width="1" height="1.3" fill="#ffd700"/><rect x="30" y="78.5" width="5" height="1.3" fill="#9cdcfe"/><rect x="35" y="78.5" width="1" height="1.3" fill="#d4d4d4"/><rect x="37" y="78.5" width="6" height="1.3" fill="#9cdcfe"/><rect x="43" y="78.5" width="1" height="1.3" fill="#d4d4d4"/><rect x="44" y="78.5" width="4" height="1.3" fill="#9cdcfe"/><rect x="48" y="78.5" width="1" height="1.3" fill="#d4d4d4"/><rect x="50" y="78.5" width="5" height="1.3" fill="#9cdcfe"/><rect x="55" y="78.5" width="1" height="1.3" fill="#d4d4d4"/><rect x="57" y="78.5" width="4" height="1.3" fill="#9cdcfe"/><rect x="61" y="78.5" width="1" height="1.3" fill="#d4d4d4"/><rect x="63" y="78.5" width="8" height="1.3" fill="#dcdcaa"/><rect x="71" y="78.5" width="1" height="1.3" fill="#ffd700"/><rect x="72" y="78.5" width="4" height="1.3" fill="#9cdcfe"/><rect x="76" y="78.5" width="1" height="1.3" fill="#ffd700"/><rect x="77" y="78.5" width="1" height="1.3" fill="#d4d4d4"/><rect x="79" y="78.5" width="5" height="1.3" fill="#9cdcfe"/><rect x="84" y="78.5" width="1" height="1.3" fill="#d4d4d4"/><rect x="86" y="78.5" width="8" height="1.3" fill="#dcdcaa"/><rect x="94" y="78.5" width="1" height="1.3" fill="#ffd700"/><rect x="95" y="78.5" width="5" height="1.3" fill="#9cdcfe"/><rect x="100" y="78.5" width="1" height="1.3" fill="#ffd700"/><rect x="102" y="78.5" width="1" height="1.3" fill="#ffd700"/><rect x="103" y="78.5" width="1" height="1.3" fill="#ffd700"/><rect x="104" y="78.5" width="1" height="1.3" fill="#d4d4d4"/><rect x="15" y="80.5" width="1" height="1.3" fill="#ffd700"/><rect x="17" y="80.5" width="5" height="1.3" fill="#c586c0"/><rect x="23" y="80.5" width="1" height="1.3" fill="#ffd700"/><rect x="24" y="80.5" width="3" height="1.3" fill="#9cdcfe"/><rect x="27" y="80.5" width="1" height="1.3" fill="#ffd700"/><rect x="29" y="80.5" width="1" height="1.3" fill="#ffd700"/><rect x="19" y="82.5" width="6" height="1.3" fill="#9cdcfe"/><rect x="25" y="82.5" width="1" height="1.3" fill="#d4d4d4"/><rect x="26" y="82.5" width="5" height="1.3" fill="#dcdcaa"/><rect x="31" y="82.5" width="1" height="1.3" fill="#ffd700"/><rect x="32" y="82.5" width="5" height="1.3" fill="#ce9178"/><rect x="38" y="82.5" width="5" height="1.3" fill="#ce9178"/><rect x="44" y="82.5" width="7" height="1.3" fill="#ce9178"/><rect x="51" y="82.5" width="1" height="1.3" fill="#d4d4d4"/><rect x="53" y="82.5" width="3" height="1.3" fill="#9cdcfe"/><rect x="56" y="82.5" width="1" height="1.3" fill="#d4d4d4"/><rect x="57" y="82.5" width="7" height="1.3" fill="#9cdcfe"/><rect x="64" y="82.5" width="1" height="1.3" fill="#ffd700"/><rect x="65" y="82.5" width="1" height="1.3" fill="#d4d4d4"/><rect x="19" y="84.5" width="3" height="1.3" fill="#9cdcfe"/><rect x="22" y="84.5" width="1" height="1.3" fill="#d4d4d4"/><rect x="23" y="84.5" width="6" height="1.3" fill="#dcdcaa"/><rect x="29" y="84.5" width="1" height="1.3" fill="#ffd700"/><rect x="30" y="84.5" width="3" height="1.3" fill="#b5cea8"/><rect x="33" y="84.5" width="1" height="1.3" fill="#ffd700"/><rect x="34" y="84.5" width="1" height="1.3" fill="#d4d4d4"/><rect x="35" y="84.5" width="4" height="1.3" fill="#dcdcaa"/><rect x="39" y="84.5" width="1" height="1.3" fill="#ffd700"/><rect x="40" y="84.5" width="1" height="1.3" fill="#ffd700"/><rect x="42" y="84.5" width="5" height="1.3" fill="#9cdcfe"/><rect x="47" y="84.5" width="1" height="1.3" fill="#d4d4d4"/><rect x="49" y="84.5" width="7" height="1.3" fill="#ce9178"/><rect x="57" y="84.5" width="2" height="1.3" fill="#ce9178"/><rect x="60" y="84.5" width="4" height="1.3" fill="#ce9178"/><rect x="65" y="84.5" width="6" height="1.3" fill="#ce9178"/><rect x="72" y="84.5" width="1" height="1.3" fill="#ffd700"/><rect x="73" y="84.5" width="1" height="1.3" fill="#ffd700"/><rect x="74" y="84.5" width="1" height="1.3" fill="#d4d4d4"/><rect x="15" y="86.5" width="1" height="1.3" fill="#ffd700"/><rect x="11" y="88.5" width="1" height="1.3" fill="#ffd700"/><rect x="12" y="88.5" width="1" height="1.3" fill="#d4d4d4"/><rect x="11" y="92.5" width="2" height="1.3" fill="#6a9955"/><rect x="14" y="92.5" width="3" height="1.3" fill="#6a9955"/><rect x="18" y="92.5" width="28" height="1.3" fill="#6a9955"/><rect x="47" y="92.5" width="1" height="1.3" fill="#6a9955"/><rect x="49" y="92.5" width="14" height="1.3" fill="#6a9955"/><rect x="64" y="92.5" width="7" height="1.3" fill="#6a9955"/><rect x="11" y="94.5" width="5" height="1.3" fill="#569cd6"/><rect x="17" y="94.5" width="11" height="1.3" fill="#dcdcaa"/><rect x="28" y="94.5" width="1" height="1.3" fill="#ffd700"/><rect x="29" y="94.5" width="3" height="1.3" fill="#9cdcfe"/><rect x="32" y="94.5" width="1" height="1.3" fill="#d4d4d4"/><rect x="34" y="94.5" width="3" height="1.3" fill="#9cdcfe"/><rect x="37" y="94.5" width="1" height="1.3" fill="#ffd700"/><rect x="39" y="94.5" width="1" height="1.3" fill="#ffd700"/><rect x="15" y="96.5" width="3" height="1.3" fill="#c586c0"/><rect x="19" y="96.5" width="1" height="1.3" fill="#ffd700"/><rect x="19" y="98.5" width="5" height="1.3" fill="#569cd6"/><rect x="25" y="98.5" width="1" height="1.3" fill="#ffd700"/><rect x="27" y="98.5" width="8" height="1.3" fill="#9cdcfe"/><rect x="35" y="98.5" width="1" height="1.3" fill="#d4d4d4"/><rect x="37" y="98.5" width="4" height="1.3" fill="#9cdcfe"/><rect x="41" y="98.5" width="1" height="1.3" fill="#d4d4d4"/><rect x="43" y="98.5" width="5" height="1.3" fill="#9cdcfe"/><rect x="49" y="98.5" width="1" height="1.3" fill="#ffd700"/><rect x="51" y="98.5" width="1" height="1.3" fill="#d4d4d4"/><rect x="53" y="98.5" width="3" height="1.3" fill="#9cdcfe"/><rect x="56" y="98.5" width="1" height="1.3" fill="#d4d4d4"/><rect x="57" y="98.5" width="4" height="1.3" fill="#9cdcfe"/><rect x="61" y="98.5" width="1" height="1.3" fill="#d4d4d4"/><rect x="63" y="98.5" width="2" height="1.3" fill="#6a9955"/><rect x="66" y="98.5" width="4" height="1.3" fill="#6a9955"/><rect x="19" y="102.5" width="2" height="1.3" fill="#6a9955"/><rect x="22" y="102.5" width="5" height="1.3" fill="#6a9955"/><rect x="28" y="102.5" width="9" height="1.3" fill="#6a9955"/><rect x="19" y="104.5" width="5" height="1.3" fill="#569cd6"/><rect x="25" y="104.5" width="8" height="1.3" fill="#9cdcfe"/><rect x="34" y="104.5" width="1" height="1.3" fill="#d4d4d4"/><rect x="36" y="104.5" width="5" height="1.3" fill="#569cd6"/><rect x="42" y="104.5" width="5" height="1.3" fill="#dcdcaa"/><rect x="47" y="104.5" width="1" height="1.3" fill="#ffd700"/><rect x="48" y="104.5" width="7" height="1.3" fill="#ce9178"/><rect x="56" y="104.5" width="2" height="1.3" fill="#ce9178"/><rect x="59" y="104.5" width="4" height="1.3" fill="#ce9178"/><rect x="64" y="104.5" width="5" height="1.3" fill="#ce9178"/><rect x="70" y="104.5" width="5" height="1.3" fill="#ce9178"/><rect x="76" y="104.5" width="2" height="1.3" fill="#ce9178"/><rect x="79" y="104.5" width="1" height="1.3" fill="#ce9178"/><rect x="81" y="104.5" width="3" height="1.3" fill="#ce9178"/><rect x="84" y="104.5" width="1" height="1.3" fill="#d4d4d4"/><rect x="86" y="104.5" width="1" height="1.3" fill="#ffd700"/><rect x="87" y="104.5" width="3" height="1.3" fill="#9cdcfe"/><rect x="90" y="104.5" width="1" height="1.3" fill="#d4d4d4"/><rect x="91" y="104.5" width="6" height="1.3" fill="#9cdcfe"/><rect x="97" y="104.5" width="1" height="1.3" fill="#d4d4d4"/><rect x="98" y="104.5" width="2" height="1.3" fill="#9cdcfe"/><rect x="100" y="104.5" width="1" height="1.3" fill="#ffd700"/><rect x="101" y="104.5" width="1" height="1.3" fill="#ffd700"/><rect x="102" y="104.5" width="1" height="1.3" fill="#d4d4d4"/><rect x="19" y="106.5" width="2" height="1.3" fill="#c586c0"/><rect x="22" y="106.5" width="1" height="1.3" fill="#ffd700"/><rect x="23" y="106.5" width="8" height="1.3" fill="#9cdcfe"/><rect x="31" y="106.5" width="1" height="1.3" fill="#d4d4d4"/><rect x="32" y="106.5" width="4" height="1.3" fill="#9cdcfe"/><rect x="36" y="106.5" width="1" height="1.3" fill="#d4d4d4"/><rect x="37" y="106.5" width="6" height="1.3" fill="#9cdcfe"/><rect x="44" y="106.5" width="1" height="1.3" fill="#d4d4d4"/><rect x="45" y="106.5" width="1" height="1.3" fill="#d4d4d4"/><rect x="46" y="106.5" width="1" height="1.3" fill="#d4d4d4"/><rect x="48" y="106.5" width="1" height="1.3" fill="#b5cea8"/><rect x="49" y="106.5" width="1" height="1.3" fill="#ffd700"/><rect x="51" y="106.5" width="1" height="1.3" fill="#ffd700"/><rect x="23" y="108.5" width="6" height="1.3" fill="#c586c0"/><rect x="30" y="108.5" width="3" height="1.3" fill="#9cdcfe"/><rect x="33" y="108.5" width="1" height="1.3" fill="#d4d4d4"/><rect x="34" y="108.5" width="6" height="1.3" fill="#dcdcaa"/><rect x="40" y="108.5" width="1" height="1.3" fill="#ffd700"/><rect x="41" y="108.5" width="3" height="1.3" fill="#b5cea8"/><rect x="44" y="108.5" width="1" height="1.3" fill="#ffd700"/><rect x="45" y="108.5" width="1" height="1.3" fill="#d4d4d4"/><rect x="46" y="108.5" width="4" height="1.3" fill="#dcdcaa"/><rect x="50" y="108.5" width="1" height="1.3" fill="#ffd700"/><rect x="51" y="108.5" width="1" height="1.3" fill="#ffd700"/><rect x="53" y="108.5" width="5" height="1.3" fill="#9cdcfe"/><rect x="58" y="108.5" width="1" height="1.3" fill="#d4d4d4"/><rect x="60" y="108.5" width="5" height="1.3" fill="#ce9178"/><rect x="66" y="108.5" width="3" height="1.3" fill="#ce9178"/><rect x="70" y="108.5" width="6" height="1.3" fill="#ce9178"/><rect x="77" y="108.5" width="1" height="1.3" fill="#ffd700"/><rect x="78" y="108.5" width="1" height="1.3" fill="#ffd700"/><rect x="79" y="108.5" width="1" height="1.3" fill="#d4d4d4"/><rect x="19" y="110.5" width="1" height="1.3" fill="#ffd700"/><rect x="19" y="114.5" width="5" height="1.3" fill="#569cd6"/><rect x="25" y="114.5" width="7" height="1.3" fill="#9cdcfe"/><rect x="33" y="114.5" width="1" height="1.3" fill="#d4d4d4"/><rect x="35" y="114.5" width="5" height="1.3" fill="#569cd6"/><rect x="41" y="114.5" width="5" height="1.3" fill="#dcdcaa"/><rect x="46" y="114.5" width="1" height="1.3" fill="#ffd700"/><rect x="47" y="114.5" width="7" height="1.3" fill="#ce9178"/><rect x="55" y="114.5" width="2" height="1.3" fill="#ce9178"/><rect x="58" y="114.5" width="4" height="1.3" fill="#ce9178"/><rect x="63" y="114.5" width="5" height="1.3" fill="#ce9178"/><rect x="69" y="114.5" width="5" height="1.3" fill="#ce9178"/><rect x="75" y="114.5" width="2" height="1.3" fill="#ce9178"/><rect x="77" y="114.5" width="1" height="1.3" fill="#ffd700"/><rect x="78" y="114.5" width="1" height="1.3" fill="#d4d4d4"/><rect x="19" y="116.5" width="5" height="1.3" fill="#569cd6"/><rect x="25" y="116.5" width="6" height="1.3" fill="#9cdcfe"/><rect x="32" y="116.5" width="1" height="1.3" fill="#d4d4d4"/><rect x="34" y="116.5" width="7" height="1.3" fill="#9cdcfe"/><rect x="41" y="116.5" width="1" height="1.3" fill="#d4d4d4"/><rect x="42" y="116.5" width="4" height="1.3" fill="#9cdcfe"/><rect x="46" y="116.5" width="1" height="1.3" fill="#d4d4d4"/><rect x="47" y="116.5" width="6" height="1.3" fill="#9cdcfe"/><rect x="54" y="116.5" width="1" height="1.3" fill="#d4d4d4"/><rect x="56" y="116.5" width="7" height="1.3" fill="#9cdcfe"/><rect x="63" y="116.5" width="1" height="1.3" fill="#d4d4d4"/><rect x="64" y="116.5" width="4" height="1.3" fill="#9cdcfe"/><rect x="68" y="116.5" width="1" height="1.3" fill="#ffd700"/><rect x="69" y="116.5" width="1" height="1.3" fill="#b5cea8"/><rect x="70" y="116.5" width="1" height="1.3" fill="#ffd700"/><rect x="71" y="116.5" width="1" height="1.3" fill="#d4d4d4"/><rect x="72" y="116.5" width="2" height="1.3" fill="#9cdcfe"/><rect x="75" y="116.5" width="1" height="1.3" fill="#d4d4d4"/><rect x="77" y="116.5" width="8" height="1.3" fill="#9cdcfe"/><rect x="85" y="116.5" width="1" height="1.3" fill="#d4d4d4"/><rect x="86" y="116.5" width="4" height="1.3" fill="#9cdcfe"/><rect x="90" y="116.5" width="1" height="1.3" fill="#ffd700"/><rect x="91" y="116.5" width="1" height="1.3" fill="#b5cea8"/><rect x="92" y="116.5" width="1" height="1.3" fill="#ffd700"/><rect x="93" y="116.5" width="1" height="1.3" fill="#d4d4d4"/><rect x="94" y="116.5" width="7" height="1.3" fill="#9cdcfe"/><rect x="101" y="116.5" width="1" height="1.3" fill="#d4d4d4"/><rect x="19" y="118.5" width="5" height="1.3" fill="#569cd6"/><rect x="25" y="118.5" width="5" height="1.3" fill="#9cdcfe"/><rect x="31" y="118.5" width="1" height="1.3" fill="#d4d4d4"/><rect x="33" y="118.5" width="8" height="1.3" fill="#9cdcfe"/><rect x="42" y="118.5" width="1" height="1.3" fill="#d4d4d4"/><rect x="44" y="118.5" width="3" height="1.3" fill="#569cd6"/><rect x="48" y="118.5" width="4" height="1.3" fill="#dcdcaa"/><rect x="52" y="118.5" width="1" height="1.3" fill="#ffd700"/><rect x="53" y="118.5" width="1" height="1.3" fill="#ffd700"/><rect x="55" y="118.5" width="1" height="1.3" fill="#d4d4d4"/><rect x="57" y="118.5" width="4" height="1.3" fill="#569cd6"/><rect x="61" y="118.5" width="1" height="1.3" fill="#d4d4d4"/><rect x="19" y="122.5" width="5" height="1.3" fill="#569cd6"/><rect x="25" y="122.5" width="6" height="1.3" fill="#9cdcfe"/><rect x="32" y="122.5" width="1" height="1.3" fill="#d4d4d4"/><rect x="34" y="122.5" width="5" height="1.3" fill="#569cd6"/><rect x="40" y="122.5" width="5" height="1.3" fill="#dcdcaa"/><rect x="45" y="122.5" width="1" height="1.3" fill="#ffd700"/><rect x="23" y="124.5" width="7" height="1.3" fill="#ce9178"/><rect x="31" y="124.5" width="5" height="1.3" fill="#ce9178"/><rect x="37" y="124.5" width="3" height="1.3" fill="#ce9178"/><rect x="41" y="124.5" width="11" height="1.3" fill="#ce9178"/><rect x="53" y="124.5" width="1" height="1.3" fill="#ce9178"/><rect x="55" y="124.5" width="3" height="1.3" fill="#ce9178"/><rect x="59" y="124.5" width="7" height="1.3" fill="#ce9178"/><rect x="67" y="124.5" width="1" height="1.3" fill="#ce9178"/><rect x="69" y="124.5" width="3" height="1.3" fill="#ce9178"/><rect x="73" y="124.5" width="11" height="1.3" fill="#ce9178"/><rect x="85" y="124.5" width="1" height="1.3" fill="#ce9178"/><rect x="87" y="124.5" width="3" height="1.3" fill="#ce9178"/><rect x="91" y="124.5" width="11" height="1.3" fill="#ce9178"/><rect x="103" y="124.5" width="1" height="1.3" fill="#ce9178"/><rect x="105" y="124.5" width="3" height="1.3" fill="#ce9178"/><rect x="109" y="124.5" width="2" height="1.3" fill="#ce9178"/><rect x="24" y="126.5" width="5" height="1.3" fill="#ce9178"/><rect x="30" y="126.5" width="2" height="1.3" fill="#ce9178"/><rect x="33" y="126.5" width="1" height="1.3" fill="#ce9178"/><rect x="35" y="126.5" width="2" height="1.3" fill="#ce9178"/><rect x="38" y="126.5" width="9" height="1.3" fill="#ce9178"/><rect x="48" y="126.5" width="3" height="1.3" fill="#ce9178"/><rect x="52" y="126.5" width="6" height="1.3" fill="#ce9178"/><rect x="59" y="126.5" width="5" height="1.3" fill="#ce9178"/><rect x="65" y="126.5" width="12" height="1.3" fill="#ce9178"/><rect x="78" y="126.5" width="8" height="1.3" fill="#ce9178"/><rect x="86" y="126.5" width="1" height="1.3" fill="#d4d4d4"/><rect x="23" y="128.5" width="1" height="1.3" fill="#ffd700"/><rect x="24" y="128.5" width="8" height="1.3" fill="#9cdcfe"/><rect x="32" y="128.5" width="1" height="1.3" fill="#d4d4d4"/><rect x="34" y="128.5" width="6" height="1.3" fill="#9cdcfe"/><rect x="40" y="128.5" width="1" height="1.3" fill="#d4d4d4"/><rect x="42" y="128.5" width="5" height="1.3" fill="#9cdcfe"/><rect x="47" y="128.5" width="1" height="1.3" fill="#d4d4d4"/><rect x="49" y="128.5" width="5" height="1.3" fill="#9cdcfe"/><rect x="54" y="128.5" width="1" height="1.3" fill="#ffd700"/><rect x="19" y="130.5" width="1" height="1.3" fill="#ffd700"/><rect x="20" y="130.5" width="1" height="1.3" fill="#d4d4d4"/><rect x="19" y="134.5" width="5" height="1.3" fill="#569cd6"/><rect x="25" y="134.5" width="6" height="1.3" fill="#9cdcfe"/><rect x="31" y="134.5" width="1" height="1.3" fill="#d4d4d4"/><rect x="32" y="134.5" width="8" height="1.3" fill="#dcdcaa"/><rect x="40" y="134.5" width="1" height="1.3" fill="#ffd700"/><rect x="41" y="134.5" width="3" height="1.3" fill="#9cdcfe"/><rect x="44" y="134.5" width="1" height="1.3" fill="#d4d4d4"/><rect x="45" y="134.5" width="4" height="1.3" fill="#9cdcfe"/><rect x="49" y="134.5" width="1" height="1.3" fill="#d4d4d4"/><rect x="50" y="134.5" width="2" height="1.3" fill="#9cdcfe"/><rect x="52" y="134.5" width="1" height="1.3" fill="#d4d4d4"/><rect x="54" y="134.5" width="8" height="1.3" fill="#ce9178"/><rect x="63" y="134.5" width="5" height="1.3" fill="#ce9178"/><rect x="68" y="134.5" width="1" height="1.3" fill="#d4d4d4"/><rect x="70" y="134.5" width="7" height="1.3" fill="#ce9178"/><rect x="77" y="134.5" width="1" height="1.3" fill="#d4d4d4"/><rect x="79" y="134.5" width="3" height="1.3" fill="#9cdcfe"/><rect x="82" y="134.5" width="1" height="1.3" fill="#d4d4d4"/><rect x="83" y="134.5" width="6" height="1.3" fill="#9cdcfe"/><rect x="89" y="134.5" width="1" height="1.3" fill="#d4d4d4"/><rect x="90" y="134.5" width="2" height="1.3" fill="#9cdcfe"/><rect x="92" y="134.5" width="1" height="1.3" fill="#d4d4d4"/><rect x="94" y="134.5" width="1" height="1.3" fill="#ffd700"/><rect x="96" y="134.5" width="8" height="1.3" fill="#9cdcfe"/><rect x="105" y="134.5" width="1" height="1.3" fill="#ffd700"/><rect x="106" y="134.5" width="1" height="1.3" fill="#d4d4d4"/><rect x="108" y="134.5" width="3" height="1.3" fill="#9cdcfe"/><rect x="19" y="138.5" width="3" height="1.3" fill="#9cdcfe"/><rect x="22" y="138.5" width="1" height="1.3" fill="#d4d4d4"/><rect x="23" y="138.5" width="4" height="1.3" fill="#dcdcaa"/><rect x="27" y="138.5" width="1" height="1.3" fill="#ffd700"/><rect x="28" y="138.5" width="1" height="1.3" fill="#ffd700"/><rect x="30" y="138.5" width="7" height="1.3" fill="#9cdcfe"/><rect x="37" y="138.5" width="1" height="1.3" fill="#d4d4d4"/><rect x="39" y="138.5" width="5" height="1.3" fill="#ce9178"/><rect x="45" y="138.5" width="8" height="1.3" fill="#ce9178"/><rect x="53" y="138.5" width="1" height="1.3" fill="#d4d4d4"/><rect x="55" y="138.5" width="4" height="1.3" fill="#9cdcfe"/><rect x="59" y="138.5" width="1" height="1.3" fill="#d4d4d4"/><rect x="61" y="138.5" width="6" height="1.3" fill="#9cdcfe"/><rect x="67" y="138.5" width="1" height="1.3" fill="#d4d4d4"/><rect x="68" y="138.5" width="4" height="1.3" fill="#9cdcfe"/><rect x="72" y="138.5" width="1" height="1.3" fill="#ffd700"/><rect x="73" y="138.5" width="1" height="1.3" fill="#b5cea8"/><rect x="74" y="138.5" width="1" height="1.3" fill="#ffd700"/><rect x="75" y="138.5" width="1" height="1.3" fill="#d4d4d4"/><rect x="77" y="138.5" width="8" height="1.3" fill="#9cdcfe"/><rect x="86" y="138.5" width="1" height="1.3" fill="#ffd700"/><rect x="87" y="138.5" width="1" height="1.3" fill="#ffd700"/><rect x="88" y="138.5" width="1" height="1.3" fill="#d4d4d4"/><rect x="15" y="140.5" width="1" height="1.3" fill="#ffd700"/><rect x="17" y="140.5" width="5" height="1.3" fill="#c586c0"/><rect x="23" y="140.5" width="1" height="1.3" fill="#ffd700"/><rect x="24" y="140.5" width="3" height="1.3" fill="#9cdcfe"/><rect x="27" y="140.5" width="1" height="1.3" fill="#ffd700"/><rect x="29" y="140.5" width="1" height="1.3" fill="#ffd700"/><rect x="19" y="142.5" width="6" height="1.3" fill="#9cdcfe"/><rect x="25" y="142.5" width="1" height="1.3" fill="#d4d4d4"/><rect x="26" y="142.5" width="5" height="1.3" fill="#dcdcaa"/><rect x="31" y="142.5" width="1" height="1.3" fill="#ffd700"/><rect x="32" y="142.5" width="8" height="1.3" fill="#ce9178"/><rect x="41" y="142.5" width="4" height="1.3" fill="#ce9178"/><rect x="46" y="142.5" width="7" height="1.3" fill="#ce9178"/><rect x="53" y="142.5" width="1" height="1.3" fill="#d4d4d4"/><rect x="55" y="142.5" width="3" height="1.3" fill="#9cdcfe"/><rect x="58" y="142.5" width="1" height="1.3" fill="#d4d4d4"/><rect x="59" y="142.5" width="7" height="1.3" fill="#9cdcfe"/><rect x="66" y="142.5" width="1" height="1.3" fill="#ffd700"/><rect x="67" y="142.5" width="1" height="1.3" fill="#d4d4d4"/><rect x="19" y="144.5" width="3" height="1.3" fill="#9cdcfe"/><rect x="22" y="144.5" width="1" height="1.3" fill="#d4d4d4"/><rect x="23" y="144.5" width="6" height="1.3" fill="#dcdcaa"/><rect x="29" y="144.5" width="1" height="1.3" fill="#ffd700"/><rect x="30" y="144.5" width="3" height="1.3" fill="#b5cea8"/><rect x="33" y="144.5" width="1" height="1.3" fill="#ffd700"/><rect x="34" y="144.5" width="1" height="1.3" fill="#d4d4d4"/><rect x="35" y="144.5" width="4" height="1.3" fill="#dcdcaa"/><rect x="39" y="144.5" width="1" height="1.3" fill="#ffd700"/><rect x="40" y="144.5" width="1" height="1.3" fill="#ffd700"/><rect x="42" y="144.5" width="5" height="1.3" fill="#9cdcfe"/><rect x="47" y="144.5" width="1" height="1.3" fill="#d4d4d4"/><rect x="49" y="144.5" width="7" height="1.3" fill="#ce9178"/><rect x="57" y="144.5" width="2" height="1.3" fill="#ce9178"/><rect x="60" y="144.5" width="6" height="1.3" fill="#ce9178"/><rect x="67" y="144.5" width="5" height="1.3" fill="#ce9178"/><rect x="73" y="144.5" width="1" height="1.3" fill="#ffd700"/><rect x="74" y="144.5" width="1" height="1.3" fill="#ffd700"/><rect x="75" y="144.5" width="1" height="1.3" fill="#d4d4d4"/><rect x="15" y="146.5" width="1" height="1.3" fill="#ffd700"/><rect x="11" y="148.5" width="1" height="1.3" fill="#ffd700"/><rect x="12" y="148.5" width="1" height="1.3" fill="#d4d4d4"/><rect x="11" y="152.5" width="2" height="1.3" fill="#6a9955"/><rect x="14" y="152.5" width="3" height="1.3" fill="#6a9955"/><rect x="18" y="152.5" width="25" height="1.3" fill="#6a9955"/><rect x="44" y="152.5" width="1" height="1.3" fill="#6a9955"/><rect x="46" y="152.5" width="6" height="1.3" fill="#6a9955"/><rect x="53" y="152.5" width="4" height="1.3" fill="#6a9955"/><rect x="58" y="152.5" width="4" height="1.3" fill="#6a9955"/><rect x="11" y="154.5" width="5" height="1.3" fill="#569cd6"/><rect x="17" y="154.5" width="10" height="1.3" fill="#dcdcaa"/><rect x="27" y="154.5" width="1" height="1.3" fill="#ffd700"/><rect x="28" y="154.5" width="3" height="1.3" fill="#9cdcfe"/><rect x="31" y="154.5" width="1" height="1.3" fill="#d4d4d4"/><rect x="33" y="154.5" width="3" height="1.3" fill="#9cdcfe"/><rect x="36" y="154.5" width="1" height="1.3" fill="#ffd700"/><rect x="38" y="154.5" width="1" height="1.3" fill="#ffd700"/><rect x="15" y="156.5" width="3" height="1.3" fill="#c586c0"/><rect x="19" y="156.5" width="1" height="1.3" fill="#ffd700"/><rect x="19" y="158.5" width="5" height="1.3" fill="#569cd6"/><rect x="25" y="158.5" width="1" height="1.3" fill="#ffd700"/><rect x="27" y="158.5" width="2" height="1.3" fill="#9cdcfe"/><rect x="30" y="158.5" width="1" height="1.3" fill="#ffd700"/><rect x="32" y="158.5" width="1" height="1.3" fill="#d4d4d4"/><rect x="34" y="158.5" width="3" height="1.3" fill="#9cdcfe"/><rect x="37" y="158.5" width="1" height="1.3" fill="#d4d4d4"/><rect x="38" y="158.5" width="6" height="1.3" fill="#9cdcfe"/><rect x="44" y="158.5" width="1" height="1.3" fill="#d4d4d4"/><rect x="19" y="160.5" width="5" height="1.3" fill="#569cd6"/><rect x="25" y="160.5" width="1" height="1.3" fill="#ffd700"/><rect x="27" y="160.5" width="4" height="1.3" fill="#9cdcfe"/><rect x="32" y="160.5" width="1" height="1.3" fill="#ffd700"/><rect x="34" y="160.5" width="1" height="1.3" fill="#d4d4d4"/><rect x="36" y="160.5" width="3" height="1.3" fill="#9cdcfe"/><rect x="39" y="160.5" width="1" height="1.3" fill="#d4d4d4"/><rect x="40" y="160.5" width="4" height="1.3" fill="#9cdcfe"/><rect x="44" y="160.5" width="1" height="1.3" fill="#d4d4d4"/><rect x="19" y="164.5" width="5" height="1.3" fill="#569cd6"/><rect x="25" y="164.5" width="10" height="1.3" fill="#9cdcfe"/><rect x="36" y="164.5" width="1" height="1.3" fill="#d4d4d4"/><rect x="38" y="164.5" width="5" height="1.3" fill="#569cd6"/><rect x="44" y="164.5" width="5" height="1.3" fill="#dcdcaa"/><rect x="49" y="164.5" width="1" height="1.3" fill="#ffd700"/><rect x="50" y="164.5" width="7" height="1.3" fill="#ce9178"/><rect x="58" y="164.5" width="2" height="1.3" fill="#ce9178"/><rect x="61" y="164.5" width="4" height="1.3" fill="#ce9178"/><rect x="66" y="164.5" width="5" height="1.3" fill="#ce9178"/><rect x="72" y="164.5" width="5" height="1.3" fill="#ce9178"/><rect x="78" y="164.5" width="4" height="1.3" fill="#ce9178"/><rect x="83" y="164.5" width="1" height="1.3" fill="#ce9178"/><rect x="85" y="164.5" width="3" height="1.3" fill="#ce9178"/><rect x="88" y="164.5" width="1" height="1.3" fill="#d4d4d4"/><rect x="90" y="164.5" width="1" height="1.3" fill="#ffd700"/><rect x="91" y="164.5" width="4" height="1.3" fill="#9cdcfe"/><rect x="95" y="164.5" width="1" height="1.3" fill="#ffd700"/><rect x="96" y="164.5" width="1" height="1.3" fill="#ffd700"/><rect x="97" y="164.5" width="1" height="1.3" fill="#d4d4d4"/><rect x="19" y="166.5" width="2" height="1.3" fill="#c586c0"/><rect x="22" y="166.5" width="1" height="1.3" fill="#ffd700"/><rect x="23" y="166.5" width="10" height="1.3" fill="#9cdcfe"/><rect x="33" y="166.5" width="1" height="1.3" fill="#d4d4d4"/><rect x="34" y="166.5" width="4" height="1.3" fill="#9cdcfe"/><rect x="38" y="166.5" width="1" height="1.3" fill="#d4d4d4"/><rect x="39" y="166.5" width="6" height="1.3" fill="#9cdcfe"/><rect x="46" y="166.5" width="1" height="1.3" fill="#d4d4d4"/><rect x="47" y="166.5" width="1" height="1.3" fill="#d4d4d4"/><rect x="48" y="166.5" width="1" height="1.3" fill="#d4d4d4"/><rect x="50" y="166.5" width="1" height="1.3" fill="#b5cea8"/><rect x="51" y="166.5" width="1" height="1.3" fill="#ffd700"/><rect x="53" y="166.5" width="1" height="1.3" fill="#ffd700"/><rect x="23" y="168.5" width="6" height="1.3" fill="#c586c0"/><rect x="30" y="168.5" width="3" height="1.3" fill="#9cdcfe"/><rect x="33" y="168.5" width="1" height="1.3" fill="#d4d4d4"/><rect x="34" y="168.5" width="6" height="1.3" fill="#dcdcaa"/><rect x="40" y="168.5" width="1" height="1.3" fill="#ffd700"/><rect x="41" y="168.5" width="3" height="1.3" fill="#b5cea8"/><rect x="44" y="168.5" width="1" height="1.3" fill="#ffd700"/><rect x="45" y="168.5" width="1" height="1.3" fill="#d4d4d4"/><rect x="46" y="168.5" width="4" height="1.3" fill="#dcdcaa"/><rect x="50" y="168.5" width="1" height="1.3" fill="#ffd700"/><rect x="51" y="168.5" width="1" height="1.3" fill="#ffd700"/><rect x="53" y="168.5" width="5" height="1.3" fill="#9cdcfe"/><rect x="58" y="168.5" width="1" height="1.3" fill="#d4d4d4"/><rect x="60" y="168.5" width="8" height="1.3" fill="#ce9178"/><rect x="69" y="168.5" width="5" height="1.3" fill="#ce9178"/><rect x="75" y="168.5" width="1" height="1.3" fill="#ffd700"/><rect x="76" y="168.5" width="1" height="1.3" fill="#ffd700"/><rect x="77" y="168.5" width="1" height="1.3" fill="#d4d4d4"/><rect x="19" y="170.5" width="1" height="1.3" fill="#ffd700"/><rect x="19" y="174.5" width="5" height="1.3" fill="#569cd6"/><rect x="25" y="174.5" width="5" height="1.3" fill="#dcdcaa"/><rect x="30" y="174.5" width="1" height="1.3" fill="#ffd700"/><rect x="31" y="174.5" width="7" height="1.3" fill="#ce9178"/><rect x="39" y="174.5" width="5" height="1.3" fill="#ce9178"/><rect x="45" y="174.5" width="3" height="1.3" fill="#ce9178"/><rect x="49" y="174.5" width="7" height="1.3" fill="#ce9178"/><rect x="57" y="174.5" width="1" height="1.3" fill="#ce9178"/><rect x="59" y="174.5" width="3" height="1.3" fill="#ce9178"/><rect x="63" y="174.5" width="10" height="1.3" fill="#ce9178"/><rect x="74" y="174.5" width="1" height="1.3" fill="#ce9178"/><rect x="76" y="174.5" width="5" height="1.3" fill="#ce9178"/><rect x="82" y="174.5" width="5" height="1.3" fill="#ce9178"/><rect x="88" y="174.5" width="2" height="1.3" fill="#ce9178"/><rect x="91" y="174.5" width="1" height="1.3" fill="#ce9178"/><rect x="93" y="174.5" width="3" height="1.3" fill="#ce9178"/><rect x="96" y="174.5" width="1" height="1.3" fill="#d4d4d4"/><rect x="98" y="174.5" width="1" height="1.3" fill="#ffd700"/><rect x="99" y="174.5" width="10" height="1.3" fill="#9cdcfe"/><rect x="109" y="174.5" width="1" height="1.3" fill="#d4d4d4"/><rect x="110" y="174.5" width="1" height="1.3" fill="#9cdcfe"/><rect x="19" y="178.5" width="5" height="1.3" fill="#569cd6"/><rect x="25" y="178.5" width="6" height="1.3" fill="#9cdcfe"/><rect x="31" y="178.5" width="1" height="1.3" fill="#d4d4d4"/><rect x="32" y="178.5" width="8" height="1.3" fill="#dcdcaa"/><rect x="40" y="178.5" width="1" height="1.3" fill="#ffd700"/><rect x="41" y="178.5" width="3" height="1.3" fill="#9cdcfe"/><rect x="44" y="178.5" width="1" height="1.3" fill="#d4d4d4"/><rect x="45" y="178.5" width="4" height="1.3" fill="#9cdcfe"/><rect x="49" y="178.5" width="1" height="1.3" fill="#d4d4d4"/><rect x="50" y="178.5" width="2" height="1.3" fill="#9cdcfe"/><rect x="52" y="178.5" width="1" height="1.3" fill="#d4d4d4"/><rect x="54" y="178.5" width="7" height="1.3" fill="#ce9178"/><rect x="62" y="178.5" width="5" height="1.3" fill="#ce9178"/><rect x="67" y="178.5" width="1" height="1.3" fill="#d4d4d4"/><rect x="69" y="178.5" width="7" height="1.3" fill="#ce9178"/><rect x="76" y="178.5" width="1" height="1.3" fill="#d4d4d4"/><rect x="78" y="178.5" width="2" height="1.3" fill="#9cdcfe"/><rect x="80" y="178.5" width="1" height="1.3" fill="#d4d4d4"/><rect x="82" y="178.5" width="1" height="1.3" fill="#ffd700"/><rect x="84" y="178.5" width="4" height="1.3" fill="#9cdcfe"/><rect x="88" y="178.5" width="1" height="1.3" fill="#d4d4d4"/><rect x="90" y="178.5" width="4" height="1.3" fill="#9cdcfe"/><rect x="94" y="178.5" width="1" height="1.3" fill="#d4d4d4"/><rect x="96" y="178.5" width="8" height="1.3" fill="#9cdcfe"/><rect x="104" y="178.5" width="1" height="1.3" fill="#d4d4d4"/><rect x="106" y="178.5" width="4" height="1.3" fill="#569cd6"/><rect x="19" y="182.5" width="3" height="1.3" fill="#9cdcfe"/><rect x="22" y="182.5" width="1" height="1.3" fill="#d4d4d4"/><rect x="23" y="182.5" width="4" height="1.3" fill="#dcdcaa"/><rect x="27" y="182.5" width="1" height="1.3" fill="#ffd700"/><rect x="28" y="182.5" width="1" height="1.3" fill="#ffd700"/><rect x="30" y="182.5" width="7" height="1.3" fill="#9cdcfe"/><rect x="37" y="182.5" width="1" height="1.3" fill="#d4d4d4"/><rect x="39" y="182.5" width="5" height="1.3" fill="#ce9178"/><rect x="45" y="182.5" width="8" height="1.3" fill="#ce9178"/><rect x="54" y="182.5" width="1" height="1.3" fill="#ffd700"/><rect x="55" y="182.5" width="1" height="1.3" fill="#ffd700"/><rect x="56" y="182.5" width="1" height="1.3" fill="#d4d4d4"/><rect x="15" y="184.5" width="1" height="1.3" fill="#ffd700"/><rect x="17" y="184.5" width="5" height="1.3" fill="#c586c0"/><rect x="23" y="184.5" width="1" height="1.3" fill="#ffd700"/><rect x="24" y="184.5" width="3" height="1.3" fill="#9cdcfe"/><rect x="27" y="184.5" width="1" height="1.3" fill="#ffd700"/><rect x="29" y="184.5" width="1" height="1.3" fill="#ffd700"/><rect x="19" y="186.5" width="3" height="1.3" fill="#9cdcfe"/><rect x="22" y="186.5" width="1" height="1.3" fill="#d4d4d4"/><rect x="23" y="186.5" width="6" height="1.3" fill="#dcdcaa"/><rect x="29" y="186.5" width="1" height="1.3" fill="#ffd700"/><rect x="30" y="186.5" width="3" height="1.3" fill="#b5cea8"/><rect x="33" y="186.5" width="1" height="1.3" fill="#ffd700"/><rect x="34" y="186.5" width="1" height="1.3" fill="#d4d4d4"/><rect x="35" y="186.5" width="4" height="1.3" fill="#dcdcaa"/><rect x="39" y="186.5" width="1" height="1.3" fill="#ffd700"/><rect x="40" y="186.5" width="1" height="1.3" fill="#ffd700"/><rect x="42" y="186.5" width="5" height="1.3" fill="#9cdcfe"/><rect x="47" y="186.5" width="1" height="1.3" fill="#d4d4d4"/><rect x="49" y="186.5" width="7" height="1.3" fill="#ce9178"/><rect x="57" y="186.5" width="2" height="1.3" fill="#ce9178"/><rect x="60" y="186.5" width="6" height="1.3" fill="#ce9178"/><rect x="67" y="186.5" width="5" height="1.3" fill="#ce9178"/><rect x="73" y="186.5" width="1" height="1.3" fill="#ffd700"/><rect x="74" y="186.5" width="1" height="1.3" fill="#ffd700"/><rect x="75" y="186.5" width="1" height="1.3" fill="#d4d4d4"/><rect x="15" y="188.5" width="1" height="1.3" fill="#ffd700"/><rect x="11" y="190.5" width="1" height="1.3" fill="#ffd700"/><rect x="12" y="190.5" width="1" height="1.3" fill="#d4d4d4"/><rect x="11" y="194.5" width="2" height="1.3" fill="#6a9955"/><rect x="14" y="194.5" width="6" height="1.3" fill="#6a9955"/><rect x="21" y="194.5" width="20" height="1.3" fill="#6a9955"/><rect x="42" y="194.5" width="1" height="1.3" fill="#6a9955"/><rect x="44" y="194.5" width="6" height="1.3" fill="#6a9955"/><rect x="51" y="194.5" width="4" height="1.3" fill="#6a9955"/><rect x="11" y="196.5" width="5" height="1.3" fill="#569cd6"/><rect x="17" y="196.5" width="10" height="1.3" fill="#dcdcaa"/><rect x="27" y="196.5" width="1" height="1.3" fill="#ffd700"/><rect x="28" y="196.5" width="3" height="1.3" fill="#9cdcfe"/><rect x="31" y="196.5" width="1" height="1.3" fill="#d4d4d4"/><rect x="33" y="196.5" width="3" height="1.3" fill="#9cdcfe"/><rect x="36" y="196.5" width="1" height="1.3" fill="#ffd700"/><rect x="38" y="196.5" width="1" height="1.3" fill="#ffd700"/><rect x="15" y="198.5" width="3" height="1.3" fill="#c586c0"/><rect x="19" y="198.5" width="1" height="1.3" fill="#ffd700"/><rect x="19" y="200.5" width="5" height="1.3" fill="#569cd6"/><rect x="25" y="200.5" width="1" height="1.3" fill="#ffd700"/><rect x="27" y="200.5" width="2" height="1.3" fill="#9cdcfe"/><rect x="30" y="200.5" width="1" height="1.3" fill="#ffd700"/><rect x="32" y="200.5" width="1" height="1.3" fill="#d4d4d4"/><rect x="34" y="200.5" width="3" height="1.3" fill="#9cdcfe"/><rect x="37" y="200.5" width="1" height="1.3" fill="#d4d4d4"/><rect x="38" y="200.5" width="6" height="1.3" fill="#9cdcfe"/><rect x="44" y="200.5" width="1" height="1.3" fill="#d4d4d4"/><rect x="19" y="204.5" width="2" height="1.3" fill="#6a9955"/><rect x="22" y="204.5" width="7" height="1.3" fill="#6a9955"/><rect x="30" y="204.5" width="13" height="1.3" fill="#6a9955"/><rect x="19" y="206.5" width="2" height="1.3" fill="#c586c0"/><rect x="22" y="206.5" width="1" height="1.3" fill="#ffd700"/><rect x="23" y="206.5" width="2" height="1.3" fill="#9cdcfe"/><rect x="26" y="206.5" width="1" height="1.3" fill="#d4d4d4"/><rect x="27" y="206.5" width="1" height="1.3" fill="#d4d4d4"/><rect x="28" y="206.5" width="1" height="1.3" fill="#d4d4d4"/><rect x="30" y="206.5" width="3" height="1.3" fill="#9cdcfe"/><rect x="33" y="206.5" width="1" height="1.3" fill="#d4d4d4"/><rect x="34" y="206.5" width="4" height="1.3" fill="#9cdcfe"/><rect x="38" y="206.5" width="1" height="1.3" fill="#d4d4d4"/><rect x="39" y="206.5" width="2" height="1.3" fill="#9cdcfe"/><rect x="41" y="206.5" width="1" height="1.3" fill="#ffd700"/><rect x="43" y="206.5" width="1" height="1.3" fill="#ffd700"/><rect x="23" y="208.5" width="6" height="1.3" fill="#c586c0"/><rect x="30" y="208.5" width="3" height="1.3" fill="#9cdcfe"/><rect x="33" y="208.5" width="1" height="1.3" fill="#d4d4d4"/><rect x="34" y="208.5" width="6" height="1.3" fill="#dcdcaa"/><rect x="40" y="208.5" width="1" height="1.3" fill="#ffd700"/><rect x="41" y="208.5" width="3" height="1.3" fill="#b5cea8"/><rect x="44" y="208.5" width="1" height="1.3" fill="#ffd700"/><rect x="45" y="208.5" width="1" height="1.3" fill="#d4d4d4"/><rect x="46" y="208.5" width="4" height="1.3" fill="#dcdcaa"/><rect x="50" y="208.5" width="1" height="1.3" fill="#ffd700"/><rect x="51" y="208.5" width="1" height="1.3" fill="#ffd700"/><rect x="53" y="208.5" width="5" height="1.3" fill="#9cdcfe"/><rect x="58" y="208.5" width="1" height="1.3" fill="#d4d4d4"/><rect x="60" y="208.5" width="7" height="1.3" fill="#ce9178"/><rect x="68" y="208.5" width="6" height="1.3" fill="#ce9178"/><rect x="75" y="208.5" width="4" height="1.3" fill="#ce9178"/><rect x="80" y="208.5" width="3" height="1.3" fill="#ce9178"/><rect x="84" y="208.5" width="8" height="1.3" fill="#ce9178"/><rect x="93" y="208.5" width="1" height="1.3" fill="#ffd700"/><rect x="94" y="208.5" width="1" height="1.3" fill="#ffd700"/><rect x="95" y="208.5" width="1" height="1.3" fill="#d4d4d4"/><rect x="19" y="210.5" width="1" height="1.3" fill="#ffd700"/><rect x="19" y="214.5" width="5" height="1.3" fill="#569cd6"/><rect x="25" y="214.5" width="5" height="1.3" fill="#dcdcaa"/><rect x="30" y="214.5" width="1" height="1.3" fill="#ffd700"/><rect x="31" y="214.5" width="7" height="1.3" fill="#ce9178"/><rect x="39" y="214.5" width="4" height="1.3" fill="#ce9178"/><rect x="44" y="214.5" width="5" height="1.3" fill="#ce9178"/><rect x="50" y="214.5" width="5" height="1.3" fill="#ce9178"/><rect x="56" y="214.5" width="2" height="1.3" fill="#ce9178"/><rect x="59" y="214.5" width="1" height="1.3" fill="#ce9178"/><rect x="61" y="214.5" width="3" height="1.3" fill="#ce9178"/><rect x="64" y="214.5" width="1" height="1.3" fill="#d4d4d4"/><rect x="66" y="214.5" width="1" height="1.3" fill="#ffd700"/><rect x="67" y="214.5" width="2" height="1.3" fill="#9cdcfe"/><rect x="69" y="214.5" width="1" height="1.3" fill="#ffd700"/><rect x="70" y="214.5" width="1" height="1.3" fill="#ffd700"/><rect x="71" y="214.5" width="1" height="1.3" fill="#d4d4d4"/><rect x="19" y="216.5" width="5" height="1.3" fill="#569cd6"/><rect x="25" y="216.5" width="6" height="1.3" fill="#9cdcfe"/><rect x="31" y="216.5" width="1" height="1.3" fill="#d4d4d4"/><rect x="32" y="216.5" width="8" height="1.3" fill="#dcdcaa"/><rect x="40" y="216.5" width="1" height="1.3" fill="#ffd700"/><rect x="41" y="216.5" width="3" height="1.3" fill="#9cdcfe"/><rect x="44" y="216.5" width="1" height="1.3" fill="#d4d4d4"/><rect x="45" y="216.5" width="4" height="1.3" fill="#9cdcfe"/><rect x="49" y="216.5" width="1" height="1.3" fill="#d4d4d4"/><rect x="50" y="216.5" width="2" height="1.3" fill="#9cdcfe"/><rect x="52" y="216.5" width="1" height="1.3" fill="#d4d4d4"/><rect x="54" y="216.5" width="7" height="1.3" fill="#ce9178"/><rect x="62" y="216.5" width="5" height="1.3" fill="#ce9178"/><rect x="67" y="216.5" width="1" height="1.3" fill="#d4d4d4"/><rect x="69" y="216.5" width="7" height="1.3" fill="#ce9178"/><rect x="76" y="216.5" width="1" height="1.3" fill="#d4d4d4"/><rect x="78" y="216.5" width="2" height="1.3" fill="#9cdcfe"/><rect x="80" y="216.5" width="1" height="1.3" fill="#d4d4d4"/><rect x="82" y="216.5" width="4" height="1.3" fill="#569cd6"/><rect x="86" y="216.5" width="1" height="1.3" fill="#d4d4d4"/><rect x="88" y="216.5" width="3" height="1.3" fill="#9cdcfe"/><rect x="91" y="216.5" width="1" height="1.3" fill="#d4d4d4"/><rect x="92" y="216.5" width="2" height="1.3" fill="#9cdcfe"/><rect x="94" y="216.5" width="1" height="1.3" fill="#ffd700"/><rect x="95" y="216.5" width="1" height="1.3" fill="#d4d4d4"/><rect x="19" y="220.5" width="3" height="1.3" fill="#9cdcfe"/><rect x="22" y="220.5" width="1" height="1.3" fill="#d4d4d4"/><rect x="23" y="220.5" width="4" height="1.3" fill="#dcdcaa"/><rect x="27" y="220.5" width="1" height="1.3" fill="#ffd700"/><rect x="28" y="220.5" width="1" height="1.3" fill="#ffd700"/><rect x="30" y="220.5" width="7" height="1.3" fill="#9cdcfe"/><rect x="37" y="220.5" width="1" height="1.3" fill="#d4d4d4"/><rect x="39" y="220.5" width="5" height="1.3" fill="#ce9178"/><rect x="45" y="220.5" width="8" height="1.3" fill="#ce9178"/><rect x="54" y="220.5" width="1" height="1.3" fill="#ffd700"/><rect x="55" y="220.5" width="1" height="1.3" fill="#ffd700"/><rect x="56" y="220.5" width="1" height="1.3" fill="#d4d4d4"/><rect x="15" y="222.5" width="1" height="1.3" fill="#ffd700"/><rect x="17" y="222.5" width="5" height="1.3" fill="#c586c0"/><rect x="23" y="222.5" width="1" height="1.3" fill="#ffd700"/><rect x="24" y="222.5" width="3" height="1.3" fill="#9cdcfe"/><rect x="27" y="222.5" width="1" height="1.3" fill="#ffd700"/><rect x="29" y="222.5" width="1" height="1.3" fill="#ffd700"/><rect x="19" y="224.5" width="3" height="1.3" fill="#9cdcfe"/><rect x="22" y="224.5" width="1" height="1.3" fill="#d4d4d4"/><rect x="23" y="224.5" width="6" height="1.3" fill="#dcdcaa"/><rect x="29" y="224.5" width="1" height="1.3" fill="#ffd700"/><rect x="30" y="224.5" width="3" height="1.3" fill="#b5cea8"/><rect x="33" y="224.5" width="1" height="1.3" fill="#ffd700"/><rect x="34" y="224.5" width="1" height="1.3" fill="#d4d4d4"/><rect x="35" y="224.5" width="4" height="1.3" fill="#dcdcaa"/><rect x="39" y="224.5" width="1" height="1.3" fill="#ffd700"/><rect x="40" y="224.5" width="1" height="1.3" fill="#ffd700"/><rect x="42" y="224.5" width="5" height="1.3" fill="#9cdcfe"/><rect x="47" y="224.5" width="1" height="1.3" fill="#d4d4d4"/><rect x="49" y="224.5" width="7" height="1.3" fill="#ce9178"/><rect x="57" y="224.5" width="2" height="1.3" fill="#ce9178"/><rect x="60" y="224.5" width="6" height="1.3" fill="#ce9178"/><rect x="67" y="224.5" width="5" height="1.3" fill="#ce9178"/><rect x="73" y="224.5" width="1" height="1.3" fill="#ffd700"/><rect x="74" y="224.5" width="1" height="1.3" fill="#ffd700"/><rect x="75" y="224.5" width="1" height="1.3" fill="#d4d4d4"/><rect x="15" y="226.5" width="1" height="1.3" fill="#ffd700"/><rect x="11" y="228.5" width="1" height="1.3" fill="#ffd700"/><rect x="12" y="228.5" width="1" height="1.3" fill="#d4d4d4"/><rect x="11" y="232.5" width="2" height="1.3" fill="#6a9955"/><rect x="14" y="232.5" width="3" height="1.3" fill="#6a9955"/><rect x="18" y="232.5" width="16" height="1.3" fill="#6a9955"/><rect x="35" y="232.5" width="1" height="1.3" fill="#6a9955"/><rect x="37" y="232.5" width="9" height="1.3" fill="#6a9955"/><rect x="47" y="232.5" width="5" height="1.3" fill="#6a9955"/><rect x="11" y="234.5" width="5" height="1.3" fill="#569cd6"/><rect x="17" y="234.5" width="8" height="1.3" fill="#dcdcaa"/><rect x="25" y="234.5" width="1" height="1.3" fill="#ffd700"/><rect x="26" y="234.5" width="3" height="1.3" fill="#9cdcfe"/><rect x="29" y="234.5" width="1" height="1.3" fill="#d4d4d4"/><rect x="31" y="234.5" width="3" height="1.3" fill="#9cdcfe"/><rect x="34" y="234.5" width="1" height="1.3" fill="#ffd700"/><rect x="36" y="234.5" width="1" height="1.3" fill="#ffd700"/><rect x="15" y="236.5" width="3" height="1.3" fill="#c586c0"/><rect x="19" y="236.5" width="1" height="1.3" fill="#ffd700"/><rect x="19" y="238.5" width="5" height="1.3" fill="#569cd6"/><rect x="25" y="238.5" width="1" height="1.3" fill="#ffd700"/><rect x="26" y="238.5" width="5" height="1.3" fill="#9cdcfe"/><rect x="31" y="238.5" width="1" height="1.3" fill="#d4d4d4"/><rect x="33" y="238.5" width="7" height="1.3" fill="#9cdcfe"/><rect x="40" y="238.5" width="1" height="1.3" fill="#d4d4d4"/><rect x="42" y="238.5" width="8" height="1.3" fill="#9cdcfe"/><rect x="50" y="238.5" width="1" height="1.3" fill="#d4d4d4"/><rect x="52" y="238.5" width="13" height="1.3" fill="#9cdcfe"/><rect x="65" y="238.5" width="1" height="1.3" fill="#d4d4d4"/><rect x="67" y="238.5" width="7" height="1.3" fill="#9cdcfe"/><rect x="74" y="238.5" width="1" height="1.3" fill="#d4d4d4"/><rect x="76" y="238.5" width="14" height="1.3" fill="#9cdcfe"/><rect x="90" y="238.5" width="1" height="1.3" fill="#ffd700"/><rect x="92" y="238.5" width="1" height="1.3" fill="#d4d4d4"/><rect x="94" y="238.5" width="5" height="1.3" fill="#569cd6"/><rect x="100" y="238.5" width="7" height="1.3" fill="#9cdcfe"/><rect x="107" y="238.5" width="1" height="1.3" fill="#d4d4d4"/><rect x="108" y="238.5" width="3" height="1.3" fill="#dcdcaa"/><rect x="23" y="240.5" width="5" height="1.3" fill="#dcdcaa"/><rect x="28" y="240.5" width="1" height="1.3" fill="#ffd700"/><rect x="29" y="240.5" width="7" height="1.3" fill="#ce9178"/><rect x="37" y="240.5" width="8" height="1.3" fill="#ce9178"/><rect x="46" y="240.5" width="4" height="1.3" fill="#ce9178"/><rect x="51" y="240.5" width="5" height="1.3" fill="#ce9178"/><rect x="57" y="240.5" width="5" height="1.3" fill="#ce9178"/><rect x="63" y="240.5" width="9" height="1.3" fill="#ce9178"/><rect x="73" y="240.5" width="1" height="1.3" fill="#ce9178"/><rect x="75" y="240.5" width="4" height="1.3" fill="#ce9178"/><rect x="80" y="240.5" width="3" height="1.3" fill="#ce9178"/><rect x="84" y="240.5" width="11" height="1.3" fill="#ce9178"/><rect x="96" y="240.5" width="1" height="1.3" fill="#ce9178"/><rect x="98" y="240.5" width="4" height="1.3" fill="#ce9178"/><rect x="103" y="240.5" width="3" height="1.3" fill="#ce9178"/><rect x="107" y="240.5" width="4" height="1.3" fill="#ce9178"/><rect x="23" y="242.5" width="5" height="1.3" fill="#dcdcaa"/><rect x="28" y="242.5" width="1" height="1.3" fill="#ffd700"/><rect x="29" y="242.5" width="7" height="1.3" fill="#ce9178"/><rect x="37" y="242.5" width="8" height="1.3" fill="#ce9178"/><rect x="46" y="242.5" width="4" height="1.3" fill="#ce9178"/><rect x="51" y="242.5" width="5" height="1.3" fill="#ce9178"/><rect x="57" y="242.5" width="1" height="1.3" fill="#ce9178"/><rect x="59" y="242.5" width="4" height="1.3" fill="#ce9178"/><rect x="64" y="242.5" width="5" height="1.3" fill="#ce9178"/><rect x="70" y="242.5" width="1" height="1.3" fill="#ce9178"/><rect x="72" y="242.5" width="2" height="1.3" fill="#ce9178"/><rect x="75" y="242.5" width="9" height="1.3" fill="#ce9178"/><rect x="85" y="242.5" width="1" height="1.3" fill="#ce9178"/><rect x="87" y="242.5" width="4" height="1.3" fill="#ce9178"/><rect x="92" y="242.5" width="5" height="1.3" fill="#ce9178"/><rect x="98" y="242.5" width="6" height="1.3" fill="#ce9178"/><rect x="105" y="242.5" width="1" height="1.3" fill="#ce9178"/><rect x="107" y="242.5" width="2" height="1.3" fill="#ce9178"/><rect x="110" y="242.5" width="1" height="1.3" fill="#ce9178"/><rect x="23" y="244.5" width="5" height="1.3" fill="#dcdcaa"/><rect x="28" y="244.5" width="1" height="1.3" fill="#ffd700"/><rect x="29" y="244.5" width="7" height="1.3" fill="#ce9178"/><rect x="37" y="244.5" width="8" height="1.3" fill="#ce9178"/><rect x="46" y="244.5" width="4" height="1.3" fill="#ce9178"/><rect x="51" y="244.5" width="5" height="1.3" fill="#ce9178"/><rect x="57" y="244.5" width="1" height="1.3" fill="#ce9178"/><rect x="59" y="244.5" width="4" height="1.3" fill="#ce9178"/><rect x="64" y="244.5" width="5" height="1.3" fill="#ce9178"/><rect x="70" y="244.5" width="1" height="1.3" fill="#ce9178"/><rect x="72" y="244.5" width="2" height="1.3" fill="#ce9178"/><rect x="75" y="244.5" width="9" height="1.3" fill="#ce9178"/><rect x="85" y="244.5" width="1" height="1.3" fill="#ce9178"/><rect x="87" y="244.5" width="4" height="1.3" fill="#ce9178"/><rect x="92" y="244.5" width="5" height="1.3" fill="#ce9178"/><rect x="98" y="244.5" width="6" height="1.3" fill="#ce9178"/><rect x="105" y="244.5" width="1" height="1.3" fill="#ce9178"/><rect x="107" y="244.5" width="3" height="1.3" fill="#ce9178"/><rect x="110" y="244.5" width="1" height="1.3" fill="#d4d4d4"/><rect x="23" y="246.5" width="5" height="1.3" fill="#dcdcaa"/><rect x="28" y="246.5" width="1" height="1.3" fill="#ffd700"/><rect x="29" y="246.5" width="7" height="1.3" fill="#ce9178"/><rect x="37" y="246.5" width="8" height="1.3" fill="#ce9178"/><rect x="46" y="246.5" width="4" height="1.3" fill="#ce9178"/><rect x="51" y="246.5" width="11" height="1.3" fill="#ce9178"/><rect x="63" y="246.5" width="5" height="1.3" fill="#ce9178"/><rect x="69" y="246.5" width="6" height="1.3" fill="#ce9178"/><rect x="76" y="246.5" width="1" height="1.3" fill="#ce9178"/><rect x="78" y="246.5" width="2" height="1.3" fill="#ce9178"/><rect x="81" y="246.5" width="3" height="1.3" fill="#ce9178"/><rect x="85" y="246.5" width="8" height="1.3" fill="#ce9178"/><rect x="94" y="246.5" width="2" height="1.3" fill="#ce9178"/><rect x="97" y="246.5" width="6" height="1.3" fill="#ce9178"/><rect x="103" y="246.5" width="1" height="1.3" fill="#d4d4d4"/><rect x="105" y="246.5" width="1" height="1.3" fill="#ffd700"/><rect x="106" y="246.5" width="5" height="1.3" fill="#ce9178"/><rect x="23" y="248.5" width="5" height="1.3" fill="#dcdcaa"/><rect x="28" y="248.5" width="1" height="1.3" fill="#ffd700"/><rect x="29" y="248.5" width="7" height="1.3" fill="#ce9178"/><rect x="37" y="248.5" width="21" height="1.3" fill="#ce9178"/><rect x="59" y="248.5" width="2" height="1.3" fill="#ce9178"/><rect x="62" y="248.5" width="2" height="1.3" fill="#ce9178"/><rect x="65" y="248.5" width="5" height="1.3" fill="#ce9178"/><rect x="71" y="248.5" width="4" height="1.3" fill="#ce9178"/><rect x="76" y="248.5" width="8" height="1.3" fill="#ce9178"/><rect x="85" y="248.5" width="5" height="1.3" fill="#ce9178"/><rect x="91" y="248.5" width="6" height="1.3" fill="#ce9178"/><rect x="98" y="248.5" width="1" height="1.3" fill="#ce9178"/><rect x="100" y="248.5" width="3" height="1.3" fill="#ce9178"/><rect x="103" y="248.5" width="1" height="1.3" fill="#d4d4d4"/><rect x="105" y="248.5" width="1" height="1.3" fill="#ffd700"/><rect x="106" y="248.5" width="5" height="1.3" fill="#ce9178"/><rect x="23" y="250.5" width="5" height="1.3" fill="#dcdcaa"/><rect x="28" y="250.5" width="1" height="1.3" fill="#ffd700"/><rect x="29" y="250.5" width="7" height="1.3" fill="#ce9178"/><rect x="37" y="250.5" width="8" height="1.3" fill="#ce9178"/><rect x="46" y="250.5" width="4" height="1.3" fill="#ce9178"/><rect x="51" y="250.5" width="8" height="1.3" fill="#ce9178"/><rect x="60" y="250.5" width="5" height="1.3" fill="#ce9178"/><rect x="66" y="250.5" width="10" height="1.3" fill="#ce9178"/><rect x="77" y="250.5" width="2" height="1.3" fill="#ce9178"/><rect x="80" y="250.5" width="5" height="1.3" fill="#ce9178"/><rect x="86" y="250.5" width="1" height="1.3" fill="#ce9178"/><rect x="88" y="250.5" width="8" height="1.3" fill="#ce9178"/><rect x="97" y="250.5" width="2" height="1.3" fill="#ce9178"/><rect x="100" y="250.5" width="4" height="1.3" fill="#ce9178"/><rect x="104" y="250.5" width="1" height="1.3" fill="#ffd700"/><rect x="105" y="250.5" width="1" height="1.3" fill="#d4d4d4"/><rect x="19" y="252.5" width="1" height="1.3" fill="#ffd700"/><rect x="20" y="252.5" width="1" height="1.3" fill="#ffd700"/><rect x="21" y="252.5" width="1" height="1.3" fill="#d4d4d4"/><rect x="19" y="256.5" width="3" height="1.3" fill="#9cdcfe"/><rect x="22" y="256.5" width="1" height="1.3" fill="#d4d4d4"/><rect x="23" y="256.5" width="4" height="1.3" fill="#dcdcaa"/><rect x="27" y="256.5" width="1" height="1.3" fill="#ffd700"/><rect x="28" y="256.5" width="1" height="1.3" fill="#ffd700"/><rect x="23" y="258.5" width="10" height="1.3" fill="#9cdcfe"/><rect x="33" y="258.5" width="1" height="1.3" fill="#d4d4d4"/><rect x="35" y="258.5" width="8" height="1.3" fill="#dcdcaa"/><rect x="43" y="258.5" width="1" height="1.3" fill="#ffd700"/><rect x="44" y="258.5" width="5" height="1.3" fill="#9cdcfe"/><rect x="49" y="258.5" width="1" height="1.3" fill="#d4d4d4"/><rect x="50" y="258.5" width="4" height="1.3" fill="#9cdcfe"/><rect x="54" y="258.5" width="1" height="1.3" fill="#ffd700"/><rect x="55" y="258.5" width="1" height="1.3" fill="#b5cea8"/><rect x="56" y="258.5" width="1" height="1.3" fill="#ffd700"/><rect x="57" y="258.5" width="1" height="1.3" fill="#d4d4d4"/><rect x="58" y="258.5" width="5" height="1.3" fill="#9cdcfe"/><rect x="63" y="258.5" width="1" height="1.3" fill="#ffd700"/><rect x="64" y="258.5" width="1" height="1.3" fill="#d4d4d4"/><rect x="23" y="260.5" width="12" height="1.3" fill="#9cdcfe"/><rect x="35" y="260.5" width="1" height="1.3" fill="#d4d4d4"/><rect x="37" y="260.5" width="8" height="1.3" fill="#dcdcaa"/><rect x="45" y="260.5" width="1" height="1.3" fill="#ffd700"/><rect x="46" y="260.5" width="7" height="1.3" fill="#9cdcfe"/><rect x="53" y="260.5" width="1" height="1.3" fill="#d4d4d4"/><rect x="54" y="260.5" width="4" height="1.3" fill="#9cdcfe"/><rect x="58" y="260.5" width="1" height="1.3" fill="#ffd700"/><rect x="59" y="260.5" width="1" height="1.3" fill="#b5cea8"/><rect x="60" y="260.5" width="1" height="1.3" fill="#ffd700"/><rect x="61" y="260.5" width="1" height="1.3" fill="#d4d4d4"/><rect x="62" y="260.5" width="5" height="1.3" fill="#9cdcfe"/><rect x="67" y="260.5" width="1" height="1.3" fill="#ffd700"/><rect x="68" y="260.5" width="1" height="1.3" fill="#d4d4d4"/><rect x="23" y="262.5" width="13" height="1.3" fill="#9cdcfe"/><rect x="36" y="262.5" width="1" height="1.3" fill="#d4d4d4"/><rect x="38" y="262.5" width="8" height="1.3" fill="#dcdcaa"/><rect x="46" y="262.5" width="1" height="1.3" fill="#ffd700"/><rect x="47" y="262.5" width="8" height="1.3" fill="#9cdcfe"/><rect x="55" y="262.5" width="1" height="1.3" fill="#d4d4d4"/><rect x="56" y="262.5" width="4" height="1.3" fill="#9cdcfe"/><rect x="60" y="262.5" width="1" height="1.3" fill="#ffd700"/><rect x="61" y="262.5" width="1" height="1.3" fill="#b5cea8"/><rect x="62" y="262.5" width="1" height="1.3" fill="#ffd700"/><rect x="63" y="262.5" width="1" height="1.3" fill="#d4d4d4"/><rect x="64" y="262.5" width="5" height="1.3" fill="#9cdcfe"/><rect x="69" y="262.5" width="1" height="1.3" fill="#ffd700"/><rect x="70" y="262.5" width="1" height="1.3" fill="#d4d4d4"/><rect x="23" y="264.5" width="13" height="1.3" fill="#9cdcfe"/><rect x="36" y="264.5" width="1" height="1.3" fill="#d4d4d4"/><rect x="38" y="264.5" width="8" height="1.3" fill="#dcdcaa"/><rect x="46" y="264.5" width="1" height="1.3" fill="#ffd700"/><rect x="47" y="264.5" width="13" height="1.3" fill="#9cdcfe"/><rect x="60" y="264.5" width="1" height="1.3" fill="#d4d4d4"/><rect x="61" y="264.5" width="4" height="1.3" fill="#9cdcfe"/><rect x="65" y="264.5" width="1" height="1.3" fill="#ffd700"/><rect x="66" y="264.5" width="1" height="1.3" fill="#b5cea8"/><rect x="67" y="264.5" width="1" height="1.3" fill="#ffd700"/><rect x="68" y="264.5" width="1" height="1.3" fill="#d4d4d4"/><rect x="69" y="264.5" width="5" height="1.3" fill="#9cdcfe"/><rect x="74" y="264.5" width="1" height="1.3" fill="#ffd700"/><rect x="75" y="264.5" width="1" height="1.3" fill="#d4d4d4"/><rect x="23" y="266.5" width="12" height="1.3" fill="#9cdcfe"/><rect x="35" y="266.5" width="1" height="1.3" fill="#d4d4d4"/><rect x="37" y="266.5" width="10" height="1.3" fill="#dcdcaa"/><rect x="47" y="266.5" width="1" height="1.3" fill="#ffd700"/><rect x="48" y="266.5" width="7" height="1.3" fill="#9cdcfe"/><rect x="55" y="266.5" width="1" height="1.3" fill="#d4d4d4"/><rect x="56" y="266.5" width="4" height="1.3" fill="#9cdcfe"/><rect x="60" y="266.5" width="1" height="1.3" fill="#ffd700"/><rect x="61" y="266.5" width="1" height="1.3" fill="#b5cea8"/><rect x="62" y="266.5" width="1" height="1.3" fill="#ffd700"/><rect x="63" y="266.5" width="1" height="1.3" fill="#d4d4d4"/><rect x="64" y="266.5" width="5" height="1.3" fill="#9cdcfe"/><rect x="69" y="266.5" width="1" height="1.3" fill="#ffd700"/><rect x="71" y="266.5" width="1" height="1.3" fill="#d4d4d4"/><rect x="72" y="266.5" width="1" height="1.3" fill="#d4d4d4"/><rect x="74" y="266.5" width="1" height="1.3" fill="#b5cea8"/><rect x="75" y="266.5" width="1" height="1.3" fill="#d4d4d4"/><rect x="23" y="268.5" width="14" height="1.3" fill="#9cdcfe"/><rect x="37" y="268.5" width="1" height="1.3" fill="#d4d4d4"/><rect x="39" y="268.5" width="8" height="1.3" fill="#dcdcaa"/><rect x="47" y="268.5" width="1" height="1.3" fill="#ffd700"/><rect x="48" y="268.5" width="14" height="1.3" fill="#9cdcfe"/><rect x="62" y="268.5" width="1" height="1.3" fill="#d4d4d4"/><rect x="63" y="268.5" width="4" height="1.3" fill="#9cdcfe"/><rect x="67" y="268.5" width="1" height="1.3" fill="#ffd700"/><rect x="68" y="268.5" width="1" height="1.3" fill="#b5cea8"/><rect x="69" y="268.5" width="1" height="1.3" fill="#ffd700"/><rect x="70" y="268.5" width="1" height="1.3" fill="#d4d4d4"/><rect x="71" y="268.5" width="5" height="1.3" fill="#9cdcfe"/><rect x="76" y="268.5" width="1" height="1.3" fill="#ffd700"/><rect x="78" y="268.5" width="1" height="1.3" fill="#d4d4d4"/><rect x="79" y="268.5" width="1" height="1.3" fill="#d4d4d4"/><rect x="81" y="268.5" width="1" height="1.3" fill="#b5cea8"/><rect x="82" y="268.5" width="1" height="1.3" fill="#d4d4d4"/><rect x="19" y="270.5" width="1" height="1.3" fill="#ffd700"/><rect x="20" y="270.5" width="1" height="1.3" fill="#ffd700"/><rect x="21" y="270.5" width="1" height="1.3" fill="#d4d4d4"/><rect x="15" y="272.5" width="1" height="1.3" fill="#ffd700"/><rect x="17" y="272.5" width="5" height="1.3" fill="#c586c0"/><rect x="23" y="272.5" width="1" height="1.3" fill="#ffd700"/><rect x="24" y="272.5" width="3" height="1.3" fill="#9cdcfe"/><rect x="27" y="272.5" width="1" height="1.3" fill="#ffd700"/><rect x="29" y="272.5" width="1" height="1.3" fill="#ffd700"/><rect x="19" y="274.5" width="3" height="1.3" fill="#9cdcfe"/><rect x="22" y="274.5" width="1" height="1.3" fill="#d4d4d4"/><rect x="23" y="274.5" width="6" height="1.3" fill="#dcdcaa"/><rect x="29" y="274.5" width="1" height="1.3" fill="#ffd700"/><rect x="30" y="274.5" width="3" height="1.3" fill="#b5cea8"/><rect x="33" y="274.5" width="1" height="1.3" fill="#ffd700"/><rect x="34" y="274.5" width="1" height="1.3" fill="#d4d4d4"/><rect x="35" y="274.5" width="4" height="1.3" fill="#dcdcaa"/><rect x="39" y="274.5" width="1" height="1.3" fill="#ffd700"/><rect x="40" y="274.5" width="1" height="1.3" fill="#ffd700"/><rect x="42" y="274.5" width="5" height="1.3" fill="#9cdcfe"/><rect x="47" y="274.5" width="1" height="1.3" fill="#d4d4d4"/><rect x="49" y="274.5" width="7" height="1.3" fill="#ce9178"/><rect x="57" y="274.5" width="2" height="1.3" fill="#ce9178"/><rect x="60" y="274.5" width="3" height="1.3" fill="#ce9178"/><rect x="64" y="274.5" width="6" height="1.3" fill="#ce9178"/><rect x="71" y="274.5" width="1" height="1.3" fill="#ffd700"/><rect x="72" y="274.5" width="1" height="1.3" fill="#ffd700"/><rect x="73" y="274.5" width="1" height="1.3" fill="#d4d4d4"/><rect x="15" y="276.5" width="1" height="1.3" fill="#ffd700"/><rect x="11" y="278.5" width="1" height="1.3" fill="#ffd700"/><rect x="12" y="278.5" width="1" height="1.3" fill="#d4d4d4"/><rect x="11" y="282.5" width="2" height="1.3" fill="#6a9955"/><rect x="14" y="282.5" width="3" height="1.3" fill="#6a9955"/><rect x="18" y="282.5" width="21" height="1.3" fill="#6a9955"/><rect x="40" y="282.5" width="1" height="1.3" fill="#6a9955"/><rect x="42" y="282.5" width="4" height="1.3" fill="#6a9955"/><rect x="11" y="284.5" width="5" height="1.3" fill="#569cd6"/><rect x="17" y="284.5" width="12" height="1.3" fill="#dcdcaa"/><rect x="29" y="284.5" width="1" height="1.3" fill="#ffd700"/><rect x="30" y="284.5" width="3" height="1.3" fill="#9cdcfe"/><rect x="33" y="284.5" width="1" height="1.3" fill="#d4d4d4"/><rect x="35" y="284.5" width="3" height="1.3" fill="#9cdcfe"/><rect x="38" y="284.5" width="1" height="1.3" fill="#ffd700"/><rect x="40" y="284.5" width="1" height="1.3" fill="#ffd700"/><rect x="15" y="286.5" width="3" height="1.3" fill="#c586c0"/><rect x="19" y="286.5" width="1" height="1.3" fill="#ffd700"/><rect x="19" y="288.5" width="5" height="1.3" fill="#569cd6"/><rect x="25" y="288.5" width="1" height="1.3" fill="#ffd700"/><rect x="27" y="288.5" width="4" height="1.3" fill="#9cdcfe"/><rect x="32" y="288.5" width="1" height="1.3" fill="#d4d4d4"/><rect x="34" y="288.5" width="1" height="1.3" fill="#b5cea8"/><rect x="36" y="288.5" width="1" height="1.3" fill="#ffd700"/><rect x="38" y="288.5" width="1" height="1.3" fill="#d4d4d4"/><rect x="40" y="288.5" width="3" height="1.3" fill="#9cdcfe"/><rect x="43" y="288.5" width="1" height="1.3" fill="#d4d4d4"/><rect x="44" y="288.5" width="5" height="1.3" fill="#9cdcfe"/><rect x="49" y="288.5" width="1" height="1.3" fill="#d4d4d4"/><rect x="19" y="290.5" width="5" height="1.3" fill="#569cd6"/><rect x="25" y="290.5" width="5" height="1.3" fill="#9cdcfe"/><rect x="31" y="290.5" width="1" height="1.3" fill="#d4d4d4"/><rect x="33" y="290.5" width="2" height="1.3" fill="#b5cea8"/><rect x="35" y="290.5" width="1" height="1.3" fill="#d4d4d4"/><rect x="37" y="290.5" width="3" height="1.3" fill="#9cdcfe"/><rect x="41" y="290.5" width="1" height="1.3" fill="#d4d4d4"/><rect x="43" y="290.5" width="1" height="1.3" fill="#b5cea8"/><rect x="44" y="290.5" width="1" height="1.3" fill="#d4d4d4"/><rect x="19" y="294.5" width="5" height="1.3" fill="#569cd6"/><rect x="25" y="294.5" width="6" height="1.3" fill="#9cdcfe"/><rect x="32" y="294.5" width="1" height="1.3" fill="#d4d4d4"/><rect x="34" y="294.5" width="5" height="1.3" fill="#569cd6"/><rect x="40" y="294.5" width="5" height="1.3" fill="#dcdcaa"/><rect x="45" y="294.5" width="1" height="1.3" fill="#ffd700"/><rect x="46" y="294.5" width="7" height="1.3" fill="#ce9178"/><rect x="54" y="294.5" width="4" height="1.3" fill="#ce9178"/><rect x="59" y="294.5" width="6" height="1.3" fill="#ce9178"/><rect x="66" y="294.5" width="4" height="1.3" fill="#ce9178"/><rect x="71" y="294.5" width="10" height="1.3" fill="#ce9178"/><rect x="82" y="294.5" width="1" height="1.3" fill="#ce9178"/><rect x="84" y="294.5" width="4" height="1.3" fill="#ce9178"/><rect x="89" y="294.5" width="4" height="1.3" fill="#ce9178"/><rect x="94" y="294.5" width="5" height="1.3" fill="#ce9178"/><rect x="100" y="294.5" width="1" height="1.3" fill="#ce9178"/><rect x="102" y="294.5" width="2" height="1.3" fill="#ce9178"/><rect x="105" y="294.5" width="4" height="1.3" fill="#ce9178"/><rect x="110" y="294.5" width="1" height="1.3" fill="#ce9178"/><rect x="19" y="298.5" width="5" height="1.3" fill="#569cd6"/><rect x="25" y="298.5" width="5" height="1.3" fill="#9cdcfe"/><rect x="31" y="298.5" width="1" height="1.3" fill="#d4d4d4"/><rect x="33" y="298.5" width="5" height="1.3" fill="#569cd6"/><rect x="39" y="298.5" width="5" height="1.3" fill="#dcdcaa"/><rect x="44" y="298.5" width="1" height="1.3" fill="#ffd700"/><rect x="45" y="298.5" width="7" height="1.3" fill="#ce9178"/><rect x="53" y="298.5" width="8" height="1.3" fill="#ce9178"/><rect x="62" y="298.5" width="4" height="1.3" fill="#ce9178"/><rect x="67" y="298.5" width="11" height="1.3" fill="#ce9178"/><rect x="78" y="298.5" width="1" height="1.3" fill="#d4d4d4"/><rect x="80" y="298.5" width="1" height="1.3" fill="#ffd700"/><rect x="81" y="298.5" width="1" height="1.3" fill="#ffd700"/><rect x="82" y="298.5" width="1" height="1.3" fill="#ffd700"/><rect x="83" y="298.5" width="1" height="1.3" fill="#d4d4d4"/><rect x="19" y="300.5" width="5" height="1.3" fill="#569cd6"/><rect x="25" y="300.5" width="4" height="1.3" fill="#9cdcfe"/><rect x="30" y="300.5" width="1" height="1.3" fill="#d4d4d4"/><rect x="32" y="300.5" width="6" height="1.3" fill="#9cdcfe"/><rect x="38" y="300.5" width="1" height="1.3" fill="#d4d4d4"/><rect x="39" y="300.5" width="4" height="1.3" fill="#9cdcfe"/><rect x="43" y="300.5" width="1" height="1.3" fill="#d4d4d4"/><rect x="44" y="300.5" width="3" height="1.3" fill="#dcdcaa"/><rect x="47" y="300.5" width="1" height="1.3" fill="#ffd700"/><rect x="48" y="300.5" width="1" height="1.3" fill="#9cdcfe"/><rect x="50" y="300.5" width="1" height="1.3" fill="#d4d4d4"/><rect x="51" y="300.5" width="1" height="1.3" fill="#d4d4d4"/><rect x="53" y="300.5" width="1" height="1.3" fill="#ffd700"/><rect x="54" y="300.5" width="1" height="1.3" fill="#ffd700"/><rect x="56" y="300.5" width="1" height="1.3" fill="#d4d4d4"/><rect x="57" y="300.5" width="1" height="1.3" fill="#d4d4d4"/><rect x="58" y="300.5" width="1" height="1.3" fill="#d4d4d4"/><rect x="59" y="300.5" width="1" height="1.3" fill="#9cdcfe"/><rect x="60" y="300.5" width="1" height="1.3" fill="#d4d4d4"/><rect x="62" y="300.5" width="7" height="1.3" fill="#9cdcfe"/><rect x="69" y="300.5" width="1" height="1.3" fill="#d4d4d4"/><rect x="71" y="300.5" width="4" height="1.3" fill="#9cdcfe"/><rect x="75" y="300.5" width="1" height="1.3" fill="#d4d4d4"/><rect x="76" y="300.5" width="5" height="1.3" fill="#dcdcaa"/><rect x="81" y="300.5" width="1" height="1.3" fill="#ffd700"/><rect x="82" y="300.5" width="1" height="1.3" fill="#9cdcfe"/><rect x="83" y="300.5" width="1" height="1.3" fill="#d4d4d4"/><rect x="84" y="300.5" width="7" height="1.3" fill="#9cdcfe"/><rect x="92" y="300.5" width="1" height="1.3" fill="#d4d4d4"/><rect x="93" y="300.5" width="1" height="1.3" fill="#d4d4d4"/><rect x="95" y="300.5" width="4" height="1.3" fill="#569cd6"/><rect x="99" y="300.5" width="1" height="1.3" fill="#ffd700"/><rect x="100" y="300.5" width="1" height="1.3" fill="#d4d4d4"/><rect x="102" y="300.5" width="4" height="1.3" fill="#9cdcfe"/><rect x="106" y="300.5" width="1" height="1.3" fill="#d4d4d4"/><rect x="108" y="300.5" width="1" height="1.3" fill="#9cdcfe"/><rect x="109" y="300.5" width="1" height="1.3" fill="#d4d4d4"/><rect x="110" y="300.5" width="1" height="1.3" fill="#9cdcfe"/><rect x="19" y="304.5" width="3" height="1.3" fill="#9cdcfe"/><rect x="22" y="304.5" width="1" height="1.3" fill="#d4d4d4"/><rect x="23" y="304.5" width="4" height="1.3" fill="#dcdcaa"/><rect x="27" y="304.5" width="1" height="1.3" fill="#ffd700"/><rect x="28" y="304.5" width="1" height="1.3" fill="#ffd700"/><rect x="30" y="304.5" width="4" height="1.3" fill="#9cdcfe"/><rect x="34" y="304.5" width="1" height="1.3" fill="#d4d4d4"/><rect x="36" y="304.5" width="5" height="1.3" fill="#9cdcfe"/><rect x="41" y="304.5" width="1" height="1.3" fill="#d4d4d4"/><rect x="43" y="304.5" width="5" height="1.3" fill="#9cdcfe"/><rect x="48" y="304.5" width="1" height="1.3" fill="#d4d4d4"/><rect x="49" y="304.5" width="4" height="1.3" fill="#9cdcfe"/><rect x="53" y="304.5" width="1" height="1.3" fill="#ffd700"/><rect x="54" y="304.5" width="1" height="1.3" fill="#b5cea8"/><rect x="55" y="304.5" width="1" height="1.3" fill="#ffd700"/><rect x="56" y="304.5" width="1" height="1.3" fill="#d4d4d4"/><rect x="57" y="304.5" width="5" height="1.3" fill="#9cdcfe"/><rect x="62" y="304.5" width="1" height="1.3" fill="#d4d4d4"/><rect x="64" y="304.5" width="4" height="1.3" fill="#9cdcfe"/><rect x="69" y="304.5" width="1" height="1.3" fill="#ffd700"/><rect x="70" y="304.5" width="1" height="1.3" fill="#ffd700"/><rect x="71" y="304.5" width="1" height="1.3" fill="#d4d4d4"/><rect x="15" y="306.5" width="1" height="1.3" fill="#ffd700"/><rect x="17" y="306.5" width="5" height="1.3" fill="#c586c0"/><rect x="23" y="306.5" width="1" height="1.3" fill="#ffd700"/><rect x="24" y="306.5" width="3" height="1.3" fill="#9cdcfe"/><rect x="27" y="306.5" width="1" height="1.3" fill="#ffd700"/><rect x="29" y="306.5" width="1" height="1.3" fill="#ffd700"/><rect x="19" y="308.5" width="3" height="1.3" fill="#9cdcfe"/><rect x="22" y="308.5" width="1" height="1.3" fill="#d4d4d4"/><rect x="23" y="308.5" width="6" height="1.3" fill="#dcdcaa"/><rect x="29" y="308.5" width="1" height="1.3" fill="#ffd700"/><rect x="30" y="308.5" width="3" height="1.3" fill="#b5cea8"/><rect x="33" y="308.5" width="1" height="1.3" fill="#ffd700"/><rect x="34" y="308.5" width="1" height="1.3" fill="#d4d4d4"/><rect x="35" y="308.5" width="4" height="1.3" fill="#dcdcaa"/><rect x="39" y="308.5" width="1" height="1.3" fill="#ffd700"/><rect x="40" y="308.5" width="1" height="1.3" fill="#ffd700"/><rect x="42" y="308.5" width="5" height="1.3" fill="#9cdcfe"/><rect x="47" y="308.5" width="1" height="1.3" fill="#d4d4d4"/><rect x="49" y="308.5" width="7" height="1.3" fill="#ce9178"/><rect x="57" y="308.5" width="2" height="1.3" fill="#ce9178"/><rect x="60" y="308.5" width="5" height="1.3" fill="#ce9178"/><rect x="66" y="308.5" width="5" height="1.3" fill="#ce9178"/><rect x="72" y="308.5" width="5" height="1.3" fill="#ce9178"/><rect x="78" y="308.5" width="1" height="1.3" fill="#ffd700"/><rect x="79" y="308.5" width="1" height="1.3" fill="#ffd700"/><rect x="80" y="308.5" width="1" height="1.3" fill="#d4d4d4"/><rect x="15" y="310.5" width="1" height="1.3" fill="#ffd700"/><rect x="11" y="312.5" width="1" height="1.3" fill="#ffd700"/><rect x="12" y="312.5" width="1" height="1.3" fill="#d4d4d4"/><rect x="11" y="316.5" width="2" height="1.3" fill="#6a9955"/><rect x="14" y="316.5" width="4" height="1.3" fill="#6a9955"/><rect x="19" y="316.5" width="16" height="1.3" fill="#6a9955"/><rect x="36" y="316.5" width="1" height="1.3" fill="#6a9955"/><rect x="38" y="316.5" width="6" height="1.3" fill="#6a9955"/><rect x="11" y="318.5" width="5" height="1.3" fill="#569cd6"/><rect x="17" y="318.5" width="10" height="1.3" fill="#dcdcaa"/><rect x="27" y="318.5" width="1" height="1.3" fill="#ffd700"/><rect x="28" y="318.5" width="3" height="1.3" fill="#9cdcfe"/><rect x="31" y="318.5" width="1" height="1.3" fill="#d4d4d4"/><rect x="33" y="318.5" width="3" height="1.3" fill="#9cdcfe"/><rect x="36" y="318.5" width="1" height="1.3" fill="#ffd700"/><rect x="38" y="318.5" width="1" height="1.3" fill="#ffd700"/><rect x="15" y="320.5" width="3" height="1.3" fill="#c586c0"/><rect x="19" y="320.5" width="1" height="1.3" fill="#ffd700"/><rect x="19" y="322.5" width="5" height="1.3" fill="#569cd6"/><rect x="25" y="322.5" width="1" height="1.3" fill="#ffd700"/><rect x="27" y="322.5" width="5" height="1.3" fill="#9cdcfe"/><rect x="32" y="322.5" width="1" height="1.3" fill="#d4d4d4"/><rect x="34" y="322.5" width="4" height="1.3" fill="#9cdcfe"/><rect x="39" y="322.5" width="1" height="1.3" fill="#ffd700"/><rect x="41" y="322.5" width="1" height="1.3" fill="#d4d4d4"/><rect x="43" y="322.5" width="3" height="1.3" fill="#9cdcfe"/><rect x="46" y="322.5" width="1" height="1.3" fill="#d4d4d4"/><rect x="47" y="322.5" width="4" height="1.3" fill="#9cdcfe"/><rect x="51" y="322.5" width="1" height="1.3" fill="#d4d4d4"/><rect x="19" y="324.5" width="5" height="1.3" fill="#569cd6"/><rect x="25" y="324.5" width="8" height="1.3" fill="#9cdcfe"/><rect x="34" y="324.5" width="1" height="1.3" fill="#d4d4d4"/><rect x="36" y="324.5" width="5" height="1.3" fill="#569cd6"/><rect x="42" y="324.5" width="5" height="1.3" fill="#dcdcaa"/><rect x="47" y="324.5" width="1" height="1.3" fill="#ffd700"/><rect x="48" y="324.5" width="7" height="1.3" fill="#ce9178"/><rect x="56" y="324.5" width="2" height="1.3" fill="#ce9178"/><rect x="59" y="324.5" width="4" height="1.3" fill="#ce9178"/><rect x="64" y="324.5" width="5" height="1.3" fill="#ce9178"/><rect x="70" y="324.5" width="5" height="1.3" fill="#ce9178"/><rect x="76" y="324.5" width="5" height="1.3" fill="#ce9178"/><rect x="82" y="324.5" width="1" height="1.3" fill="#ce9178"/><rect x="84" y="324.5" width="3" height="1.3" fill="#ce9178"/><rect x="87" y="324.5" width="1" height="1.3" fill="#d4d4d4"/><rect x="89" y="324.5" width="1" height="1.3" fill="#ffd700"/><rect x="90" y="324.5" width="5" height="1.3" fill="#9cdcfe"/><rect x="95" y="324.5" width="1" height="1.3" fill="#ffd700"/><rect x="96" y="324.5" width="1" height="1.3" fill="#ffd700"/><rect x="97" y="324.5" width="1" height="1.3" fill="#d4d4d4"/><rect x="19" y="326.5" width="5" height="1.3" fill="#569cd6"/><rect x="25" y="326.5" width="4" height="1.3" fill="#9cdcfe"/><rect x="30" y="326.5" width="1" height="1.3" fill="#d4d4d4"/><rect x="32" y="326.5" width="5" height="1.3" fill="#569cd6"/><rect x="38" y="326.5" width="8" height="1.3" fill="#9cdcfe"/><rect x="46" y="326.5" width="1" height="1.3" fill="#d4d4d4"/><rect x="47" y="326.5" width="4" height="1.3" fill="#dcdcaa"/><rect x="51" y="326.5" width="1" height="1.3" fill="#ffd700"/><rect x="52" y="326.5" width="4" height="1.3" fill="#9cdcfe"/><rect x="56" y="326.5" width="1" height="1.3" fill="#ffd700"/><rect x="57" y="326.5" width="1" height="1.3" fill="#d4d4d4"/><rect x="19" y="330.5" width="5" height="1.3" fill="#569cd6"/><rect x="25" y="330.5" width="6" height="1.3" fill="#9cdcfe"/><rect x="32" y="330.5" width="1" height="1.3" fill="#d4d4d4"/><rect x="34" y="330.5" width="5" height="1.3" fill="#569cd6"/><rect x="40" y="330.5" width="5" height="1.3" fill="#dcdcaa"/><rect x="45" y="330.5" width="1" height="1.3" fill="#ffd700"/><rect x="46" y="330.5" width="7" height="1.3" fill="#ce9178"/><rect x="54" y="330.5" width="4" height="1.3" fill="#ce9178"/><rect x="59" y="330.5" width="5" height="1.3" fill="#ce9178"/><rect x="65" y="330.5" width="7" height="1.3" fill="#ce9178"/><rect x="73" y="330.5" width="5" height="1.3" fill="#ce9178"/><rect x="79" y="330.5" width="14" height="1.3" fill="#ce9178"/><rect x="94" y="330.5" width="8" height="1.3" fill="#ce9178"/><rect x="103" y="330.5" width="6" height="1.3" fill="#ce9178"/><rect x="110" y="330.5" width="1" height="1.3" fill="#ce9178"/><rect x="19" y="332.5" width="5" height="1.3" fill="#569cd6"/><rect x="25" y="332.5" width="6" height="1.3" fill="#9cdcfe"/><rect x="31" y="332.5" width="1" height="1.3" fill="#d4d4d4"/><rect x="32" y="332.5" width="8" height="1.3" fill="#dcdcaa"/><rect x="40" y="332.5" width="1" height="1.3" fill="#ffd700"/><rect x="41" y="332.5" width="3" height="1.3" fill="#9cdcfe"/><rect x="44" y="332.5" width="1" height="1.3" fill="#d4d4d4"/><rect x="45" y="332.5" width="4" height="1.3" fill="#9cdcfe"/><rect x="49" y="332.5" width="1" height="1.3" fill="#d4d4d4"/><rect x="50" y="332.5" width="2" height="1.3" fill="#9cdcfe"/><rect x="52" y="332.5" width="1" height="1.3" fill="#d4d4d4"/><rect x="54" y="332.5" width="7" height="1.3" fill="#ce9178"/><rect x="62" y="332.5" width="5" height="1.3" fill="#ce9178"/><rect x="67" y="332.5" width="1" height="1.3" fill="#d4d4d4"/><rect x="69" y="332.5" width="7" height="1.3" fill="#ce9178"/><rect x="76" y="332.5" width="1" height="1.3" fill="#d4d4d4"/><rect x="78" y="332.5" width="6" height="1.3" fill="#9cdcfe"/><rect x="84" y="332.5" width="1" height="1.3" fill="#d4d4d4"/><rect x="85" y="332.5" width="4" height="1.3" fill="#9cdcfe"/><rect x="89" y="332.5" width="1" height="1.3" fill="#ffd700"/><rect x="90" y="332.5" width="1" height="1.3" fill="#b5cea8"/><rect x="91" y="332.5" width="1" height="1.3" fill="#ffd700"/><rect x="92" y="332.5" width="1" height="1.3" fill="#d4d4d4"/><rect x="93" y="332.5" width="2" height="1.3" fill="#9cdcfe"/><rect x="95" y="332.5" width="1" height="1.3" fill="#d4d4d4"/><rect x="97" y="332.5" width="1" height="1.3" fill="#ffd700"/><rect x="99" y="332.5" width="5" height="1.3" fill="#9cdcfe"/><rect x="104" y="332.5" width="1" height="1.3" fill="#d4d4d4"/><rect x="106" y="332.5" width="5" height="1.3" fill="#9cdcfe"/><rect x="19" y="336.5" width="3" height="1.3" fill="#9cdcfe"/><rect x="22" y="336.5" width="1" height="1.3" fill="#d4d4d4"/><rect x="23" y="336.5" width="6" height="1.3" fill="#dcdcaa"/><rect x="29" y="336.5" width="1" height="1.3" fill="#ffd700"/><rect x="30" y="336.5" width="3" height="1.3" fill="#b5cea8"/><rect x="33" y="336.5" width="1" height="1.3" fill="#ffd700"/><rect x="34" y="336.5" width="1" height="1.3" fill="#d4d4d4"/><rect x="35" y="336.5" width="4" height="1.3" fill="#dcdcaa"/><rect x="39" y="336.5" width="1" height="1.3" fill="#ffd700"/><rect x="40" y="336.5" width="1" height="1.3" fill="#ffd700"/><rect x="42" y="336.5" width="4" height="1.3" fill="#9cdcfe"/><rect x="46" y="336.5" width="1" height="1.3" fill="#d4d4d4"/><rect x="48" y="336.5" width="6" height="1.3" fill="#9cdcfe"/><rect x="54" y="336.5" width="1" height="1.3" fill="#d4d4d4"/><rect x="55" y="336.5" width="4" height="1.3" fill="#9cdcfe"/><rect x="59" y="336.5" width="1" height="1.3" fill="#ffd700"/><rect x="60" y="336.5" width="1" height="1.3" fill="#b5cea8"/><rect x="61" y="336.5" width="1" height="1.3" fill="#ffd700"/><rect x="63" y="336.5" width="1" height="1.3" fill="#ffd700"/><rect x="64" y="336.5" width="1" height="1.3" fill="#ffd700"/><rect x="65" y="336.5" width="1" height="1.3" fill="#d4d4d4"/><rect x="15" y="338.5" width="1" height="1.3" fill="#ffd700"/><rect x="17" y="338.5" width="5" height="1.3" fill="#c586c0"/><rect x="23" y="338.5" width="1" height="1.3" fill="#ffd700"/><rect x="24" y="338.5" width="3" height="1.3" fill="#9cdcfe"/><rect x="27" y="338.5" width="1" height="1.3" fill="#ffd700"/><rect x="29" y="338.5" width="1" height="1.3" fill="#ffd700"/><rect x="19" y="340.5" width="3" height="1.3" fill="#9cdcfe"/><rect x="22" y="340.5" width="1" height="1.3" fill="#d4d4d4"/><rect x="23" y="340.5" width="6" height="1.3" fill="#dcdcaa"/><rect x="29" y="340.5" width="1" height="1.3" fill="#ffd700"/><rect x="30" y="340.5" width="3" height="1.3" fill="#b5cea8"/><rect x="33" y="340.5" width="1" height="1.3" fill="#ffd700"/><rect x="34" y="340.5" width="1" height="1.3" fill="#d4d4d4"/><rect x="35" y="340.5" width="4" height="1.3" fill="#dcdcaa"/><rect x="39" y="340.5" width="1" height="1.3" fill="#ffd700"/><rect x="40" y="340.5" width="1" height="1.3" fill="#ffd700"/><rect x="42" y="340.5" width="5" height="1.3" fill="#9cdcfe"/><rect x="47" y="340.5" width="1" height="1.3" fill="#d4d4d4"/><rect x="49" y="340.5" width="7" height="1.3" fill="#ce9178"/><rect x="57" y="340.5" width="2" height="1.3" fill="#ce9178"/><rect x="60" y="340.5" width="6" height="1.3" fill="#ce9178"/><rect x="67" y="340.5" width="5" height="1.3" fill="#ce9178"/><rect x="73" y="340.5" width="1" height="1.3" fill="#ffd700"/><rect x="74" y="340.5" width="1" height="1.3" fill="#ffd700"/><rect x="75" y="340.5" width="1" height="1.3" fill="#d4d4d4"/><rect x="15" y="342.5" width="1" height="1.3" fill="#ffd700"/><rect x="11" y="344.5" width="1" height="1.3" fill="#ffd700"/><rect x="7" y="346.5" width="1" height="1.3" fill="#ffd700"/><rect x="8" y="346.5" width="1" height="1.3" fill="#d4d4d4"/></g></svg></div>
<div id="mmshadow"></div>
<div id="vline"></div>
<div id="vscroll"></div>
<div id="vmark"></div>

<div id="tabs"></div>
<div id="tab"></div>
<div class="t" style="top:10px;font-size:15.4px;color:#cbcb41;line-height:24px;height:24px;font-weight:bold;left:477.80px;transform:scaleX(0.8499);transform-origin:0 0;-webkit-text-stroke:0.45px #cbcb41;">JS</div>
<div class="t" style="top:12px;font-size:19.2px;color:#ffffff;line-height:24px;height:24px;font-style:italic;left:504.17px;letter-spacing:-0.137px;">admin.controller.js</div>
<svg class="a" style="left:672px;top:14px" width="17" height="17" viewBox="0 0 17 17"><path d="M1.6 1.6 L15.2 15.2 M15.2 1.6 L1.6 15.2" stroke="#ffffff" stroke-width="1.5" fill="none"/></svg>
<svg class="a" style="left:1760px;top:2px" width="90" height="40" viewBox="0 0 90 40"><rect x="10.8" y="10" width="19.5" height="19.5" rx="3.6" fill="none" stroke="#d4d4d4" stroke-width="1.6"/><path d="M20.5 10 V29.5" stroke="#d4d4d4" stroke-width="1.6"/><circle cx="53.3" cy="20" r="1.5" fill="#d4d4d4"/><circle cx="59.6" cy="20" r="1.5" fill="#d4d4d4"/><circle cx="65.9" cy="20" r="1.5" fill="#d4d4d4"/></svg>
<div class="t" style="top:54px;font-size:19.2px;color:#a9a9a9;line-height:24px;height:24px;left:479.77px;letter-spacing:-0.398px;">server</div>
<svg class="a" style="left:532.5px;top:53.0px" width="24" height="24" viewBox="0 0 24 24"><path d="M7.449999999999999 4.4 L15.749999999999998 12 L7.449999999999999 19.6" fill="none" stroke="#a9a9a9" stroke-width="1.35"/></svg>
<div class="t" style="top:54px;font-size:19.2px;color:#a9a9a9;line-height:24px;height:24px;left:555.38px;letter-spacing:0.274px;">controllers</div>
<svg class="a" style="left:646.8px;top:53.0px" width="24" height="24" viewBox="0 0 24 24"><path d="M7.449999999999999 4.4 L15.749999999999998 12 L7.449999999999999 19.6" fill="none" stroke="#a9a9a9" stroke-width="1.35"/></svg>
<div class="t" style="top:53px;font-size:15.4px;color:#cbcb41;line-height:24px;height:24px;font-weight:bold;left:677.30px;transform:scaleX(0.8499);transform-origin:0 0;-webkit-text-stroke:0.45px #cbcb41;">JS</div>
<div class="t" style="top:54px;font-size:19.2px;color:#a9a9a9;line-height:24px;height:24px;left:702.88px;letter-spacing:0.173px;">admin.controller.js</div>
<svg class="a" style="left:862.5px;top:53.0px" width="24" height="24" viewBox="0 0 24 24"><path d="M7.449999999999999 4.4 L15.749999999999998 12 L7.449999999999999 19.6" fill="none" stroke="#a9a9a9" stroke-width="1.35"/></svg>
<svg class="a" style="left:886px;top:52px" width="24" height="24" viewBox="886 52 24 24"><path d="M893.6 55.7 H890.6 a1.5 1.5 0 0 0 -1.5 1.5 V70.8 a1.5 1.5 0 0 0 1.5 1.5 H893.6 M901.6 55.7 H904.6 a1.5 1.5 0 0 1 1.5 1.5 V70.8 a1.5 1.5 0 0 1 -1.5 1.5 H901.6" fill="none" stroke="#62b8fc" stroke-width="1.5"/><path d="M897.6 59.7 L903.1 62.1 V66.4 L897.6 68.8 L892.1 66.4 V62.1 Z" fill="none" stroke="#62b8fc" stroke-width="1.5" stroke-linejoin="round"/><path d="M895.2 63 L897.6 65.4 L900 63 Z" fill="#62b8fc"/></svg>
<div class="t" style="top:54px;font-size:19.2px;color:#a9a9a9;line-height:24px;height:24px;left:916.05px;letter-spacing:0.45px;">&lt;unknown&gt;</div>
<svg class="a" style="left:1021.0px;top:53.0px" width="24" height="24" viewBox="0 0 24 24"><path d="M7.449999999999999 4.4 L15.749999999999998 12 L7.449999999999999 19.6" fill="none" stroke="#a9a9a9" stroke-width="1.35"/></svg>
<svg class="a" style="left:1044px;top:52px" width="24" height="24" viewBox="1044 52 24 24"><path d="M1056.4 54.4 L1066.5 59.3 V68.7 L1056.4 73.6 L1046.3 68.7 V59.3 Z" fill="none" stroke="#b780e6" stroke-width="1.5" stroke-linejoin="round"/><path d="M1050.5 59.7 L1056.4 62.5 L1062.3 59.7 M1056.4 62.5 V68.9" fill="none" stroke="#b780e6" stroke-width="1.5" stroke-linecap="round"/></svg>
<div class="t" style="top:54px;font-size:19.2px;color:#a9a9a9;line-height:24px;height:24px;left:1072.71px;letter-spacing:-0.202px;">listUsers</div>

<div id="status"></div>
<div class="t" style="top:923px;font-size:18.0px;color:#cccccc;line-height:24px;height:24px;left:22.55px;letter-spacing:0.327px;">main*</div>
<div class="t" style="top:923px;font-size:18.0px;color:#cccccc;line-height:24px;height:24px;left:154.61px;transform:scaleX(1.1273);transform-origin:0 0;">0</div>
<div class="t" style="top:923px;font-size:18.0px;color:#cccccc;line-height:24px;height:24px;left:198.63px;transform:scaleX(1.0925);transform-origin:0 0;">0</div>
<div class="t" style="top:923px;font-size:18.0px;color:#cccccc;line-height:24px;height:24px;left:1008.62px;letter-spacing:-0.072px;">Mohamed Elbihery (1 day ago)</div>
<div class="t" style="top:923px;font-size:18.0px;color:#cccccc;line-height:24px;height:24px;left:1275.72px;letter-spacing:-0.325px;">Ln 10, Col 47</div>
<div class="t" style="top:923px;font-size:18.0px;color:#cccccc;line-height:24px;height:24px;left:1402.25px;transform:scaleX(0.9199);transform-origin:0 0;">Spaces: 4</div>
<div class="t" style="top:923px;font-size:18.0px;color:#cccccc;line-height:24px;height:24px;left:1498.77px;transform:scaleX(0.9565);transform-origin:0 0;">UTF-8</div>
<div class="t" style="top:923px;font-size:18.0px;color:#cccccc;line-height:24px;height:24px;left:1571.02px;transform:scaleX(0.8552);transform-origin:0 0;">CRLF</div>
<div class="t" style="top:923px;font-size:18.0px;color:#cccccc;line-height:24px;height:24px;left:1636.25px;transform:scaleX(1.1829);transform-origin:0 0;">{ }</div>
<div class="t" style="top:923px;font-size:18.0px;color:#cccccc;line-height:24px;height:24px;left:1667.44px;transform:scaleX(0.9292);transform-origin:0 0;">JavaScript</div><svg class="a" style="left:0;top:919px" width="22" height="28" viewBox="0 919 22 28"><circle cx="1.2" cy="927.2" r="3" fill="none" stroke="#cccccc" stroke-width="1.5"/><rect x="0" y="930.4" width="1.9" height="12.4" fill="#bcd9e2"/><circle cx="0.6" cy="945.6" r="3" fill="none" stroke="#cccccc" stroke-width="1.5"/><circle cx="11.4" cy="931.7" r="3.5" fill="none" stroke="#cccccc" stroke-width="1.5"/><circle cx="11.6" cy="941.2" r="7.6" fill="#d4d4d4" stroke="#181818" stroke-width="1.3"/><path d="M11.6 936.2 V946.2 M7.3 938.7 L15.9 943.7 M15.9 938.7 L7.3 943.7" stroke="#181818" stroke-width="1.4" fill="none"/></svg>
<svg class="a" style="left:76px;top:921px" width="30" height="26" viewBox="76 921 30 26"><path d="M88.5 940 H85.6 A4.9 4.9 0 0 1 84.9 930.3 A6.1 6.1 0 0 1 96.6 929.6" fill="none" stroke="#cccccc" stroke-width="1.5" stroke-linecap="round"/><circle cx="94.8" cy="938.8" r="7.6" fill="#d4d4d4" stroke="#181818" stroke-width="1.3"/><path d="M94.8 943 V935 M91.3 938.4 L94.8 934.9 L98.3 938.4" stroke="#181818" stroke-width="1.4" fill="none"/></svg>
<svg class="a" style="left:126px;top:922px" width="26" height="25" viewBox="126 922 26 25"><circle cx="138.7" cy="934.9" r="9.6" fill="none" stroke="#cccccc" stroke-width="1.5"/><path d="M134.3 930.5 L143.1 939.3 M143.1 930.5 L134.3 939.3" stroke="#cccccc" stroke-width="1.5" fill="none"/></svg>
<svg class="a" style="left:169px;top:922px" width="27" height="25" viewBox="169 922 27 25"><path d="M182.4 925.6 L192.4 943.9 H172.4 Z" fill="none" stroke="#cccccc" stroke-width="1.5" stroke-linejoin="round"/><path d="M182.4 931.4 V938" stroke="#cccccc" stroke-width="1.6"/><circle cx="182.4" cy="940.6" r="1.05" fill="#cccccc"/></svg>
<svg class="a" style="left:984px;top:922px" width="16" height="25" viewBox="984 922 16 25"><circle cx="991.9" cy="934.4" r="4.4" fill="none" stroke="#cccccc" stroke-width="1.5"/><path d="M991.9 924.6 V930 M991.9 938.8 V944.2" stroke="#cccccc" stroke-width="1.5"/></svg>
<svg class="a" style="left:1768px;top:922px" width="28" height="25" viewBox="1768 922 28 25"><path d="M1772.6 932.6 C1769.6 934.6 1770 938 1770.3 940.4 C1773 944.8 1778 945.9 1782.2 945.9 C1786.4 945.9 1791.4 944.8 1794.1 940.4 C1794.4 938 1794.8 934.6 1791.8 932.6 Z" fill="#cccccc"/><rect x="1775" y="935" width="13.5" height="7.1" rx="1.6" fill="#181818"/><rect x="1777.7" y="936.8" width="2.6" height="4.3" rx="1.1" fill="#cccccc"/><rect x="1783.4" y="936.8" width="2.6" height="4.3" rx="1.1" fill="#cccccc"/><rect x="1773.2" y="925.2" width="7.5" height="8" rx="3" fill="#181818" stroke="#cccccc" stroke-width="1.9"/><rect x="1783.3" y="925.2" width="7.5" height="8" rx="3" fill="#181818" stroke="#cccccc" stroke-width="1.9"/></svg>
<svg class="a" style="left:1818px;top:922px" width="24" height="25" viewBox="1818 922 24 25"><path d="M1821.6 942.2 L1823.6 938.2 V931.4 A6.45 6.45 0 0 1 1836.5 931.4 V938.2 L1838.5 942.2 Z" fill="none" stroke="#cccccc" stroke-width="1.5" stroke-linejoin="round"/><path d="M1827.9 942.6 A2.2 2.2 0 0 0 1832.3 942.6" fill="none" stroke="#cccccc" stroke-width="1.4"/></svg>
<svg class="a" style="left:800px;top:815px" width="250" height="132" viewBox="800 815 250 132"><g opacity="0.29"><path d="M852.3 832 V869.8 A16 16 0 1 1 836.3 853.8" fill="none" stroke="#ffffff" stroke-width="10" stroke-linecap="round"/><path d="M852.3 879.4 H1003" fill="none" stroke="#ffffff" stroke-width="10.8" stroke-linecap="round"/><circle cx="889.3" cy="861.8" r="12.9" fill="none" stroke="#ffffff" stroke-width="9.7"/><circle cx="881.4" cy="831" r="5.8" fill="#ffffff"/><circle cx="896.6" cy="831" r="5.8" fill="#ffffff"/><path d="M927.8 860 V880" fill="none" stroke="#ffffff" stroke-width="10" stroke-linecap="round"/><circle cx="920.2" cy="846.2" r="6.2" fill="#ffffff"/><circle cx="935.8" cy="846.2" r="6.2" fill="#ffffff"/><path d="M950.2 862.5 V880" fill="none" stroke="#ffffff" stroke-width="10" stroke-linecap="round"/><path d="M965.3 859 V880" fill="none" stroke="#ffffff" stroke-width="10" stroke-linecap="round"/><path d="M981.0 856.3 V880" fill="none" stroke="#ffffff" stroke-width="10" stroke-linecap="round"/><circle cx="1016.2" cy="869.9" r="15.6" fill="none" stroke="#ffffff" stroke-width="10"/><text x="813.2" y="920" font-family="Liberation Sans, sans-serif" font-weight="bold" font-size="35.8" textLength="225" lengthAdjust="spacingAndGlyphs" fill="#ffffff">mostaql.com</text></g></svg>
</body></html>
